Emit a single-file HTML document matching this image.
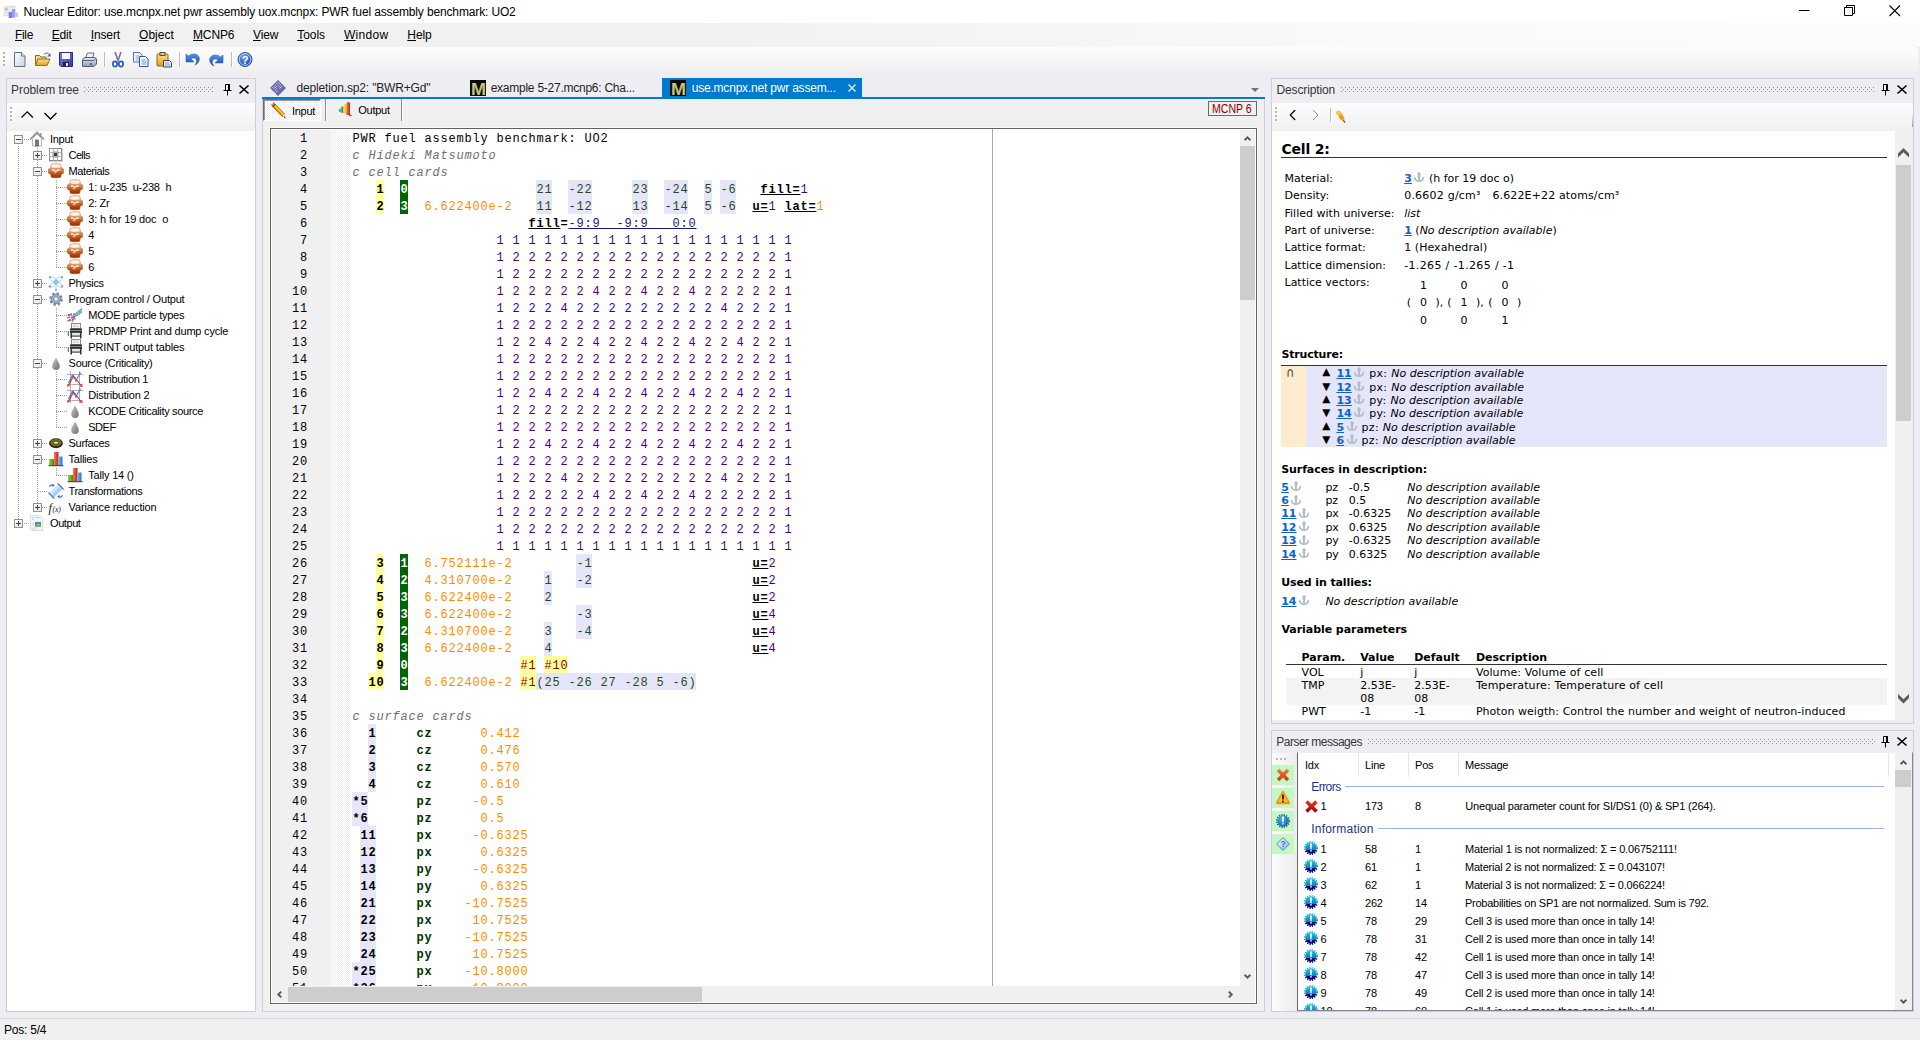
<!DOCTYPE html>
<html lang="en"><head><meta charset="utf-8"><title>Nuclear Editor</title>
<style>

html,body{margin:0;padding:0}
body{width:1920px;height:1040px;position:relative;overflow:hidden;background:#eeeef2;font-family:"Liberation Sans",sans-serif;font-size:12px;color:#000}
div{position:absolute;box-sizing:border-box}
span{white-space:pre}
svg{position:absolute;overflow:visible}
.t{position:absolute;white-space:pre;line-height:1}
.seg{font-family:"Liberation Sans",sans-serif;font-size:12px}
.mss{font-family:"Liberation Sans",sans-serif;font-size:11px;letter-spacing:-0.2px}
.vd{font-family:"DejaVu Sans","Liberation Sans",sans-serif;font-size:11px}
.cap{color:#363636}
.grip{background-image:radial-gradient(circle at .5px .5px,#9a9a9a .5px,transparent .6px),radial-gradient(circle at 2.5px 2.5px,#9a9a9a .5px,transparent .6px);background-size:4px 4px}
.tb{background:linear-gradient(#fdfdfd,#f6f6f6 50%,#efefef)}
.dotv{width:1px;background-image:linear-gradient(#a0a0a0 50%,transparent 50%);background-size:1px 2px}
.doth{height:1px;background-image:linear-gradient(90deg,#a0a0a0 50%,transparent 50%);background-size:2px 1px}
.pm{width:9px;height:9px;border:1px solid #919191;background:linear-gradient(135deg,#fff,#e6e6e6);}
.pm i{position:absolute;left:1px;top:3px;width:5px;height:1px;background:#2b3f8c}
.pm b{position:absolute;left:3px;top:1px;width:1px;height:5px;background:#2b3f8c}
.ed{font-family:"Liberation Mono",monospace;font-size:12px;letter-spacing:.8px}
.ln{position:absolute;left:0;height:17px;width:970px}
.ln span{position:absolute;top:2px;line-height:17px;height:17px;margin-left:.4px}
.ln u{position:absolute;top:0;height:17px}
.lnum{position:absolute;width:37px;margin-left:0 !important;text-align:right;left:0;line-height:17px;height:17px;color:#000}
.c{color:#6e6e6e;font-style:italic}
.cn{font-weight:bold;color:#000}
.mt{color:#fff;font-weight:bold}
.dn{color:#ff8c00}
.sr{color:#1f4a25}
.kw{font-weight:bold;text-decoration:underline;color:#000}
.kb{font-weight:bold;color:#000}
.pv{color:#4b0082}
.nv{color:#191970;text-decoration:underline}
.hr{color:#8b0000}
.sm{font-weight:bold;color:#003200}
.hy{background:#ffffa0}
.hg{background:#006400}
.hl{background:#e6e6fa}
a{color:#0a64c8;text-decoration:underline;font-weight:bold}
.anc{position:static;display:inline-block;vertical-align:-0.5px;margin:-4px 1px 0 2.6px}

</style></head>
<body>
<!-- title bar -->
<div style="left:0px;top:0px;width:1920px;height:23px;background:#fff"></div>
<svg style="left:3px;top:4px" width="16" height="16" viewBox="0 0 16 16">
<rect x=".3" y="1.500" width="12.500" height="11" fill="#e9edf2"/>
<rect x="6" y="2.500" width="6" height="1" fill="#d3dae4"/><rect x="1.500" y="7" width="4" height="1" fill="#d9dfe8"/><rect x="1.500" y="9" width="4" height="1" fill="#d9dfe8"/><rect x="1.500" y="11" width="4" height="1" fill="#d9dfe8"/>
<path d="M1.500 6l1.800-3l1.800 3z" fill="#d8c020"/>
<rect x="5.700" y="8" width="3.300" height="6" fill="#7c7cda"/><rect x="9" y="5" width="3.200" height="8.600" fill="#9c9cf0"/><rect x="12.400" y="8.500" width="2.600" height="4.500" fill="#c6c6f6"/>
</svg>
<span class="t seg" style="left:23.5px;top:6.34px;font-size:12px;color:#000;letter-spacing:-0.14px">Nuclear Editor: use.mcnpx.net pwr assembly uox.mcnpx: PWR fuel assembly benchmark: UO2</span>
<svg style="left:1795px;top:0" width="125" height="23" viewBox="0 0 125 23">
<path d="M4 10.5h10.5" stroke="#000" stroke-width="1" fill="none"/>
<path d="M49.5 7.5h8v8h-8z M51.5 7.5v-2h8v8h-2" stroke="#000" stroke-width="1" fill="none"/>
<path d="M94.5 5.500l10.5 10.500M105 5.5l-10.500 10.500" stroke="#000" stroke-width="1.1" fill="none"/>
</svg>
<!-- menu bar -->
<div style="left:0px;top:23px;width:1920px;height:24px;background:linear-gradient(90deg,#f0f0f0,#f1f1f1 35%,#fafafa 75%,#fbfbfb)"></div>
<span class="t seg" style="left:15px;top:28.84px;font-size:12px;letter-spacing:-0.34px"><span style="text-decoration:underline">F</span>ile</span>
<span class="t seg" style="left:51.7px;top:28.84px;font-size:12px;letter-spacing:-0.18px"><span style="text-decoration:underline">E</span>dit</span>
<span class="t seg" style="left:90.7px;top:28.84px;font-size:12px;letter-spacing:-0.12px"><span style="text-decoration:underline">I</span>nsert</span>
<span class="t seg" style="left:139px;top:28.84px;font-size:12px;letter-spacing:0.05px"><span style="text-decoration:underline">O</span>bject</span>
<span class="t seg" style="left:193px;top:28.84px;font-size:12px;letter-spacing:-0.14px"><span style="text-decoration:underline">M</span>CNP6</span>
<span class="t seg" style="left:253px;top:28.84px;font-size:12px;letter-spacing:-0.13px"><span style="text-decoration:underline">V</span>iew</span>
<span class="t seg" style="left:297.3px;top:28.84px;font-size:12px;letter-spacing:-0.06px"><span style="text-decoration:underline">T</span>ools</span>
<span class="t seg" style="left:344px;top:28.84px;font-size:12px;letter-spacing:0.27px"><span style="text-decoration:underline">W</span>indow</span>
<span class="t seg" style="left:407.3px;top:28.84px;font-size:12px;letter-spacing:-0.07px"><span style="text-decoration:underline">H</span>elp</span>
<!-- main toolbar -->
<div style="left:0px;top:47px;width:1918px;height:25px;background:linear-gradient(#fdfdfd,#f8f8f8 45%,#f0f0f0);border-radius:0 3px 3px 0"></div>
<div style="left:4px;top:53px;width:2px;height:2px;background:#fff"></div>
<div style="left:3px;top:52px;width:2px;height:2px;background:#b4b4b4"></div>
<div style="left:4px;top:57px;width:2px;height:2px;background:#fff"></div>
<div style="left:3px;top:56px;width:2px;height:2px;background:#b4b4b4"></div>
<div style="left:4px;top:61px;width:2px;height:2px;background:#fff"></div>
<div style="left:3px;top:60px;width:2px;height:2px;background:#b4b4b4"></div>
<div style="left:4px;top:65px;width:2px;height:2px;background:#fff"></div>
<div style="left:3px;top:64px;width:2px;height:2px;background:#b4b4b4"></div>
<div style="left:104px;top:52px;width:1px;height:15px;background:#bdbdbd"></div>
<div style="left:105px;top:52px;width:1px;height:15px;background:#fff"></div>
<div style="left:179px;top:52px;width:1px;height:15px;background:#bdbdbd"></div>
<div style="left:180px;top:52px;width:1px;height:15px;background:#fff"></div>
<div style="left:231px;top:52px;width:1px;height:15px;background:#bdbdbd"></div>
<div style="left:232px;top:52px;width:1px;height:15px;background:#fff"></div>
<svg width="0" height="0"><defs><linearGradient id="gpage" x1="0" y1="0" x2="1" y2="1"><stop offset="0" stop-color="#fff"/><stop offset="1" stop-color="#c9d2e4"/></linearGradient><linearGradient id="gfold" x1="0" y1="0" x2="0" y2="1"><stop offset="0" stop-color="#fbe28a"/><stop offset="1" stop-color="#e5a01a"/></linearGradient><linearGradient id="gsave" x1="0" y1="0" x2="1" y2="1"><stop offset="0" stop-color="#7c7ce0"/><stop offset="1" stop-color="#3a3aa8"/></linearGradient><linearGradient id="gprn" x1="0" y1="0" x2="0" y2="1"><stop offset="0" stop-color="#e8eef6"/><stop offset="1" stop-color="#8a9bb4"/></linearGradient><linearGradient id="gblue" x1="0" y1="0" x2="0" y2="1"><stop offset="0" stop-color="#5a8fe0"/><stop offset="1" stop-color="#1c4ea8"/></linearGradient><linearGradient id="gmat" x1="0" y1="0" x2="0" y2="1"><stop offset="0" stop-color="#f9dcc6"/><stop offset=".4" stop-color="#e08a54"/><stop offset=".7" stop-color="#b84c16"/><stop offset="1" stop-color="#8a3206"/></linearGradient><radialGradient id="ghelp" cx=".4" cy=".3" r=".8"><stop offset="0" stop-color="#6aa0f0"/><stop offset="1" stop-color="#1440a0"/></radialGradient><radialGradient id="ginfo" cx=".4" cy=".3" r=".8"><stop offset="0" stop-color="#4ab4ec"/><stop offset="1" stop-color="#0a5f9c"/></radialGradient><linearGradient id="ginfo2" x1="0" y1="0" x2="0" y2="1"><stop offset="0" stop-color="#20c4f4"/><stop offset=".65" stop-color="#0e84a4"/><stop offset=".68" stop-color="#0a0aa4"/><stop offset="1" stop-color="#00007c"/></linearGradient><linearGradient id="gdrop" x1="0" y1="0" x2="1" y2="1"><stop offset="0" stop-color="#c8c8c8"/><stop offset="1" stop-color="#6e6e6e"/></linearGradient></defs></svg>
<svg style="left:12px;top:52px" width="16" height="16" viewBox="0 0 16 16"><path d="M2.500 .5h7l3.500 3.500v10.500h-10.500z" fill="url(#gpage)" stroke="#5b6f8f"/><path d="M9.500 .5v3.500h3.500" fill="#fff" stroke="#5b6f8f"/></svg>
<svg style="left:35px;top:52px" width="16" height="16" viewBox="0 0 16 16"><path d="M.5 13.500v-10h4l1.500 1.500h5v2" fill="#f3d676" stroke="#8a6d2b"/><path d="M.5 13.500l2.500-6.500h12l-3 6.500z" fill="url(#gfold)" stroke="#8a6d2b"/><path d="M9 2.500c2-2.300 4.500-1.800 5.800.8" fill="none" stroke="#3c62a8"/><path d="M15.500 1v3.500h-3.300z" fill="#3c62a8"/></svg>
<svg style="left:58px;top:52px" width="16" height="16" viewBox="0 0 16 16"><path d="M1.500 .5h13v14h-11.500l-1.500-1.500z" fill="url(#gsave)" stroke="#2c2c8c"/><rect x="4" y="1" width="8" height="6" fill="#f4f6fb"/><rect x="5" y="10" width="6" height="4.500" fill="#222244"/><rect x="8" y="11" width="2" height="3" fill="#e8e8f4"/></svg>
<svg style="left:81px;top:52px" width="16" height="16" viewBox="0 0 16 16"><path d="M4.500 6l2-5h6.500l-1.500 5z" fill="#f4f6fa" stroke="#5b6f8f"/><path d="M1.500 7.500l2.500-2h10l1.500 1.500v5l-2.500 2.500h-11.500z" fill="url(#gprn)" stroke="#4c6080"/><path d="M1.500 8.500h11l2.500-2" fill="none" stroke="#4c6080"/><rect x="10" y="11" width="1" height="2" fill="#d03030"/><rect x="9" y="11" width="1" height="2" fill="#30a030"/></svg>
<svg style="left:110px;top:52px" width="16" height="16" viewBox="0 0 16 16"><path d="M5 0l3.200 9M11 0l-3.200 9" stroke="#707880" stroke-width="1.600" fill="none"/><ellipse cx="5" cy="12" rx="2.200" ry="2.600" fill="#fff" stroke="#2c5cc4" stroke-width="1.700"/><ellipse cx="11" cy="12" rx="2.200" ry="2.600" fill="#fff" stroke="#2c5cc4" stroke-width="1.700"/></svg>
<svg style="left:133px;top:52px" width="16" height="16" viewBox="0 0 16 16"><path d="M.5 .5h6l2.500 2.500v7h-8.500z" fill="#fff" stroke="#4f73b8"/><path d="M2.500 4h4M2.500 6h4M2.500 8h4" stroke="#7aa4e6"/><path d="M6.500 4.500h6l2.500 2.500v7.500h-8.500z" fill="#fff" stroke="#2f57a8"/><path d="M8.500 8h4M8.500 10h5M8.500 12h5" stroke="#5c8fe0"/></svg>
<svg style="left:156px;top:52px" width="16" height="16" viewBox="0 0 16 16"><rect x="1" y="2" width="11" height="12" rx="1" fill="url(#gfold)" stroke="#8a6420"/><rect x="4" y=".5" width="5" height="3" fill="#d8c890" stroke="#6a5020"/><path d="M7.500 8.500h6l2 2v4.500h-8z" fill="#e8ecf4" stroke="#3c4658"/><path d="M9 11h4M9 13h5" stroke="#8c9cb8"/></svg>
<svg style="left:185px;top:52px" width="16" height="16" viewBox="0 0 16 16"><path d="M1 2v8h8l-3-3c3-2.500 6.500-.5 5.500 3.500l-1.500 2.500c5-2 6-8.500 1.500-10.500-3-1.300-6-.3-8 1.500z" fill="url(#gblue)" stroke="#1c4ea8" stroke-width=".5"/></svg>
<svg style="left:208px;top:52px" width="16" height="16" viewBox="0 0 16 16"><g transform="translate(16 1) scale(-1 1)"><path d="M1 2v8h8l-3-3c3-2.500 6.500-.5 5.500 3.500l-1.500 2.500c5-2 6-8.500 1.500-10.500-3-1.300-6-.3-8 1.500z" fill="url(#gblue)" stroke="#1c4ea8" stroke-width=".5"/></g></svg>
<svg style="left:237px;top:52px" width="16" height="16" viewBox="0 0 16 16"><circle cx="8" cy="7.500" r="7" fill="url(#ghelp)" stroke="#2a56b0"/><circle cx="8" cy="7.500" r="5.800" fill="none" stroke="#dfe9fb" stroke-width=".8"/><text x="8" y="11.500" text-anchor="middle" font-family="Liberation Sans,sans-serif" font-weight="bold" font-size="11" fill="#fff">?</text></svg>
<!-- status bar -->
<div style="left:0px;top:1018px;width:1920px;height:22px;background:#f0f0f0;border-top:1px solid #d9d9d9"></div>
<span class="t seg" style="left:4px;top:1023.84px;font-size:12px;;letter-spacing:-0.22px">Pos: 5/4</span>
<svg width="0" height="0"><defs><linearGradient id="gtg" x1="0" y1="0" x2="1" y2="0"><stop offset="0" stop-color="#9ad040"/><stop offset="1" stop-color="#3c9418"/></linearGradient><linearGradient id="gtr" x1="0" y1="0" x2="1" y2="0"><stop offset="0" stop-color="#f87858"/><stop offset="1" stop-color="#cc1c0c"/></linearGradient><linearGradient id="gtb" x1="0" y1="0" x2="1" y2="0"><stop offset="0" stop-color="#6cc0f4"/><stop offset="1" stop-color="#1878cc"/></linearGradient></defs></svg>
<svg width="0" height="0"><defs><pattern id="gripp" width="4" height="4" patternUnits="userSpaceOnUse"><rect x="0" y="0" width="1" height="1" fill="#8f8f96"/><rect x="2" y="2" width="1" height="1" fill="#8f8f96"/></pattern></defs></svg>
<!-- problem tree panel -->
<div style="left:6px;top:78px;width:250px;height:934px;border:1px solid #cccedb;background:#eeeef2"></div>
<span class="t seg cap" style="left:11px;top:83.84px;font-size:12px;;letter-spacing:-0.06px">Problem tree</span>
<svg style="left:84px;top:87px" width="130" height="5" shape-rendering="crispEdges"><rect width="130" height="5" fill="url(#gripp)"/></svg>
<svg style="left:223px;top:82.5px" width="30" height="14" viewBox="0 0 30 14"><path d="M2.500 1.500h4v6h-4z" stroke="#000" stroke-width="1" fill="none"/><path d="M5 1.500h2v6h-2z" fill="#000"/><path d="M.5 7.500h8M4.500 8v4.500" stroke="#000" stroke-width="1" fill="none"/><path d="M16.500 2.500l9 8M25.500 2.500l-9 8" stroke="#000" stroke-width="1.600" fill="none"/></svg>
<div class="tb" style="left:7px;top:103px;width:248px;height:28px;"></div>
<div style="left:11px;top:108px;width:2px;height:2px;background:#fff"></div>
<div style="left:10px;top:107px;width:2px;height:2px;background:#b4b4b4"></div>
<div style="left:11px;top:112px;width:2px;height:2px;background:#fff"></div>
<div style="left:10px;top:111px;width:2px;height:2px;background:#b4b4b4"></div>
<div style="left:11px;top:116px;width:2px;height:2px;background:#fff"></div>
<div style="left:10px;top:115px;width:2px;height:2px;background:#b4b4b4"></div>
<div style="left:11px;top:120px;width:2px;height:2px;background:#fff"></div>
<div style="left:10px;top:119px;width:2px;height:2px;background:#b4b4b4"></div>
<svg style="left:20px;top:109px" width="40" height="13" viewBox="0 0 40 13"><path d="M1.500 8.500l5.700-5.700l5.700 5.700M24.500 4l6 6l6-6" stroke="#000" stroke-width="1.300" fill="none"/></svg>
<div style="left:7px;top:131px;width:248px;height:880px;background:#fff"></div>
<!-- tree -->
<div class="dotv" style="left:18px;top:145px;width:1px;height:374px;background-position:0 1px"></div>
<div class="dotv" style="left:37px;top:147px;width:1px;height:360px;background-position:0 1px"></div>
<div class="dotv" style="left:56px;top:179px;width:1px;height:88px;background-position:0 1px"></div>
<div class="dotv" style="left:56px;top:307px;width:1px;height:40px;background-position:0 1px"></div>
<div class="dotv" style="left:56px;top:371px;width:1px;height:56px;background-position:0 1px"></div>
<div class="dotv" style="left:56px;top:467px;width:1px;height:8px;background-position:0 1px"></div>
<div class="doth" style="left:23px;top:139px;width:6px;height:1px;background-position:1px 0"></div>
<div class="pm" style="left:14px;top:135px"><i></i></div>
<svg style="left:29px;top:131px" width="16" height="16" viewBox="0 0 16 16"><path d="M1 8.500l7-7l7 7" stroke="#8e8e8e" stroke-width="1.600" fill="none"/><path d="M3.500 7.500v7.500h9v-7.500l-4.500-4.500z" fill="#fafafa" stroke="#b4b4b4"/><rect x="6.500" y="9" width="3" height="6" fill="#7a7a7a" stroke="#555" stroke-width=".6"/><rect x="11" y="2" width="1.600" height="3" fill="#9a9a9a"/></svg>
<span class="t mss" style="left:50px;top:133.69px;font-size:11px;;letter-spacing:-0.29px">Input</span>
<div class="doth" style="left:42px;top:155px;width:6px;height:1px;background-position:0px 0"></div>
<div class="pm" style="left:33px;top:151px"><i></i><b></b></div>
<svg style="left:48px;top:147px" width="16" height="16" viewBox="0 0 16 16"><rect x="1.500" y="1.500" width="12" height="12" fill="#fff" stroke="#8c8c8c"/><path d="M5.500 1.500v12M9.500 1.500v12M1.500 5.500h12M1.500 9.500h12" stroke="#b8b8b8"/><rect x="6" y="6" width="3" height="3" fill="#3c3c3c"/><rect x="5" y="5" width="5" height="5" fill="none" stroke="#9a9a9a"/><path d="M1.500 14.500h13v-13" stroke="#d0d0d0" fill="none"/></svg>
<span class="t mss" style="left:68.6px;top:149.69px;font-size:11px;;letter-spacing:-0.65px">Cells</span>
<div class="doth" style="left:42px;top:171px;width:6px;height:1px;background-position:0px 0"></div>
<div class="pm" style="left:33px;top:167px"><i></i></div>
<svg style="left:48px;top:163px" width="16" height="16" viewBox="0 0 16 16"><path d="M3.300 1.200q4.700-1 9.400 0l.6 3.600l2.200 1.200v4.200l-2.200 1l-.5 3q-4.800 1.300-9.600 0l-.5-3l-2.200-1v-4.200l2.200-1.200z" fill="url(#gmat)" stroke="#a8501c" stroke-width=".5"/><path d="M3.600 1.600q4.400-.9 8.800 0l.4 2.600q-4.800 1.200-9.600 0z" fill="#fdf1e6"/><path d="M4 7.800q1.300-1.700 2.600-.2q1.300 1.500 2.500-.1q1.100-1.300 2.600 0" stroke="#fff" stroke-width="1.200" fill="none"/><path d="M5.500 9.600q1.500 1 3 0" stroke="#f8d8c0" stroke-width=".8" fill="none"/></svg>
<span class="t mss" style="left:68.6px;top:165.69px;font-size:11px;;letter-spacing:-0.43px">Materials</span>
<div class="doth" style="left:56px;top:187px;width:11px;height:1px;background-position:0px 0"></div>
<svg style="left:67px;top:179px" width="16" height="16" viewBox="0 0 16 16"><path d="M3.300 1.200q4.700-1 9.400 0l.6 3.600l2.200 1.200v4.200l-2.200 1l-.5 3q-4.800 1.300-9.600 0l-.5-3l-2.200-1v-4.200l2.200-1.200z" fill="url(#gmat)" stroke="#a8501c" stroke-width=".5"/><path d="M3.600 1.600q4.400-.9 8.800 0l.4 2.600q-4.800 1.200-9.600 0z" fill="#fdf1e6"/><path d="M4 7.800q1.300-1.700 2.600-.2q1.300 1.500 2.500-.1q1.100-1.300 2.600 0" stroke="#fff" stroke-width="1.200" fill="none"/><path d="M5.500 9.600q1.500 1 3 0" stroke="#f8d8c0" stroke-width=".8" fill="none"/></svg>
<span class="t mss" style="left:88.3px;top:181.69px;font-size:11px;;letter-spacing:-0.21px">1: u-235  u-238  h</span>
<div class="doth" style="left:56px;top:203px;width:11px;height:1px;background-position:0px 0"></div>
<svg style="left:67px;top:195px" width="16" height="16" viewBox="0 0 16 16"><path d="M3.300 1.200q4.700-1 9.400 0l.6 3.600l2.200 1.200v4.200l-2.200 1l-.5 3q-4.800 1.300-9.600 0l-.5-3l-2.200-1v-4.200l2.200-1.200z" fill="url(#gmat)" stroke="#a8501c" stroke-width=".5"/><path d="M3.600 1.600q4.400-.9 8.800 0l.4 2.600q-4.800 1.200-9.600 0z" fill="#fdf1e6"/><path d="M4 7.800q1.300-1.700 2.600-.2q1.300 1.500 2.500-.1q1.100-1.300 2.600 0" stroke="#fff" stroke-width="1.200" fill="none"/><path d="M5.500 9.600q1.500 1 3 0" stroke="#f8d8c0" stroke-width=".8" fill="none"/></svg>
<span class="t mss" style="left:88.3px;top:197.69px;font-size:11px;;letter-spacing:-0.33px">2: Zr</span>
<div class="doth" style="left:56px;top:219px;width:11px;height:1px;background-position:0px 0"></div>
<svg style="left:67px;top:211px" width="16" height="16" viewBox="0 0 16 16"><path d="M3.300 1.200q4.700-1 9.400 0l.6 3.600l2.200 1.200v4.200l-2.200 1l-.5 3q-4.800 1.300-9.600 0l-.5-3l-2.200-1v-4.200l2.200-1.200z" fill="url(#gmat)" stroke="#a8501c" stroke-width=".5"/><path d="M3.600 1.600q4.400-.9 8.800 0l.4 2.600q-4.800 1.200-9.600 0z" fill="#fdf1e6"/><path d="M4 7.800q1.300-1.700 2.600-.2q1.300 1.500 2.500-.1q1.100-1.300 2.600 0" stroke="#fff" stroke-width="1.200" fill="none"/><path d="M5.500 9.600q1.500 1 3 0" stroke="#f8d8c0" stroke-width=".8" fill="none"/></svg>
<span class="t mss" style="left:88.3px;top:213.69px;font-size:11px;;letter-spacing:-0.15px">3: h for 19 doc  o</span>
<div class="doth" style="left:56px;top:235px;width:11px;height:1px;background-position:0px 0"></div>
<svg style="left:67px;top:227px" width="16" height="16" viewBox="0 0 16 16"><path d="M3.300 1.200q4.700-1 9.400 0l.6 3.600l2.200 1.200v4.200l-2.200 1l-.5 3q-4.800 1.300-9.600 0l-.5-3l-2.200-1v-4.200l2.200-1.200z" fill="url(#gmat)" stroke="#a8501c" stroke-width=".5"/><path d="M3.600 1.600q4.400-.9 8.800 0l.4 2.600q-4.800 1.200-9.600 0z" fill="#fdf1e6"/><path d="M4 7.800q1.300-1.700 2.600-.2q1.300 1.500 2.500-.1q1.100-1.300 2.600 0" stroke="#fff" stroke-width="1.200" fill="none"/><path d="M5.500 9.600q1.500 1 3 0" stroke="#f8d8c0" stroke-width=".8" fill="none"/></svg>
<span class="t mss" style="left:88.3px;top:229.69px;font-size:11px;;letter-spacing:-0.62px">4</span>
<div class="doth" style="left:56px;top:251px;width:11px;height:1px;background-position:0px 0"></div>
<svg style="left:67px;top:243px" width="16" height="16" viewBox="0 0 16 16"><path d="M3.300 1.200q4.700-1 9.400 0l.6 3.600l2.200 1.200v4.200l-2.200 1l-.5 3q-4.800 1.300-9.600 0l-.5-3l-2.200-1v-4.200l2.200-1.200z" fill="url(#gmat)" stroke="#a8501c" stroke-width=".5"/><path d="M3.600 1.600q4.400-.9 8.800 0l.4 2.600q-4.800 1.200-9.600 0z" fill="#fdf1e6"/><path d="M4 7.800q1.300-1.700 2.600-.2q1.300 1.500 2.500-.1q1.100-1.300 2.600 0" stroke="#fff" stroke-width="1.200" fill="none"/><path d="M5.500 9.600q1.500 1 3 0" stroke="#f8d8c0" stroke-width=".8" fill="none"/></svg>
<span class="t mss" style="left:88.3px;top:245.69px;font-size:11px;;letter-spacing:-0.62px">5</span>
<div class="doth" style="left:56px;top:267px;width:11px;height:1px;background-position:0px 0"></div>
<svg style="left:67px;top:259px" width="16" height="16" viewBox="0 0 16 16"><path d="M3.300 1.200q4.700-1 9.400 0l.6 3.600l2.200 1.200v4.200l-2.200 1l-.5 3q-4.800 1.300-9.600 0l-.5-3l-2.200-1v-4.200l2.200-1.200z" fill="url(#gmat)" stroke="#a8501c" stroke-width=".5"/><path d="M3.600 1.600q4.400-.9 8.800 0l.4 2.600q-4.800 1.200-9.600 0z" fill="#fdf1e6"/><path d="M4 7.800q1.300-1.700 2.600-.2q1.300 1.500 2.500-.1q1.100-1.300 2.600 0" stroke="#fff" stroke-width="1.200" fill="none"/><path d="M5.500 9.600q1.500 1 3 0" stroke="#f8d8c0" stroke-width=".8" fill="none"/></svg>
<span class="t mss" style="left:88.3px;top:261.69px;font-size:11px;;letter-spacing:-0.62px">6</span>
<div class="doth" style="left:42px;top:283px;width:6px;height:1px;background-position:0px 0"></div>
<div class="pm" style="left:33px;top:279px"><i></i><b></b></div>
<svg style="left:48px;top:275px" width="16" height="16" viewBox="0 0 16 16"><g fill="none" stroke="#a8cfea" stroke-width=".8"><ellipse cx="8" cy="7" rx="8" ry="2.300" transform="rotate(40 8 7)"/><ellipse cx="8" cy="7" rx="8" ry="2.300" transform="rotate(-40 8 7)"/><path d="M8 8.500v5.500"/></g><circle cx="8" cy="7" r="1.800" fill="#9ccdf0" stroke="#5aa2d8" stroke-width=".7"/><circle cx="2" cy="2.200" r=".9" fill="#4a96d4"/><circle cx="14" cy="2.200" r=".9" fill="#4a96d4"/><circle cx="1.800" cy="11.500" r="1" fill="#3c86c8"/><circle cx="14.200" cy="11.500" r="1" fill="#4a96d4"/><circle cx="8" cy="15" r="1" fill="#5aa2d8"/></svg>
<span class="t mss" style="left:68.6px;top:277.69px;font-size:11px;;letter-spacing:-0.42px">Physics</span>
<div class="doth" style="left:42px;top:299px;width:6px;height:1px;background-position:0px 0"></div>
<div class="pm" style="left:33px;top:295px"><i></i></div>
<svg style="left:48px;top:291px" width="16" height="16" viewBox="0 0 16 16"><circle cx="8" cy="8.800" r="5.700" fill="none" stroke="#d0d5e2" stroke-width="2" stroke-dasharray="2.300 2.176"/><circle cx="8" cy="8" r="5.700" fill="none" stroke="#7484a8" stroke-width="2" stroke-dasharray="2.300 2.176"/><circle cx="8" cy="8" r="4.700" fill="#a3afcb" stroke="#6c7ca0" stroke-width=".9"/><circle cx="8" cy="8" r="2.200" fill="#fff" stroke="#6c7ca0" stroke-width=".9"/></svg>
<span class="t mss" style="left:68.6px;top:293.69px;font-size:11px;;letter-spacing:-0.19px">Program control / Output</span>
<div class="doth" style="left:56px;top:315px;width:11px;height:1px;background-position:0px 0"></div>
<svg style="left:67px;top:307px" width="16" height="16" viewBox="0 0 16 16"><path d="M7.500 7l7.500-6.500v5.500l-5 3.500z" fill="#8fc0c4"/><path d="M8.500 6.500l6-4.500M9.500 8l5-3.500" stroke="#4f8f9c" stroke-width=".7"/><g fill="#d0506c"><rect x="1" y="7" width="2" height="2"/><rect x="4" y="9.500" width="2" height="2"/><rect x="2" y="12" width="2" height="2"/><rect x="6" y="6.500" width="2" height="2"/><rect x="7" y="11" width="1.500" height="1.500"/><rect x="0" y="10" width="1.500" height="1.500"/><rect x="4.500" y="13.500" width="1.500" height="1.500"/></g><g fill="#5a78d0"><rect x="3" y="6.500" width="2" height="2"/><rect x="6" y="9" width="2" height="2"/><rect x="1.500" y="9.500" width="1.500" height="1.500"/><rect x="5" y="11.500" width="2" height="2"/><rect x="8" y="8" width="1.500" height="1.500"/><rect x="0.500" y="13" width="1.500" height="1.500"/></g><g fill="#e8a0b0"><rect x="3" y="8.500" width="1" height="1"/><rect x="5" y="8" width="1" height="1"/><rect x="3.500" y="11.500" width="1" height="1"/></g></svg>
<span class="t mss" style="left:88.3px;top:309.69px;font-size:11px;;letter-spacing:-0.26px">MODE particle types</span>
<div class="doth" style="left:56px;top:331px;width:11px;height:1px;background-position:0px 0"></div>
<svg style="left:67px;top:323px" width="16" height="16" viewBox="0 0 16 16"><rect x="4.500" y=".5" width="9" height="5" fill="#f6f6f6" stroke="#8c8c8c"/><path d="M6 2h5M6 3.500h6" stroke="#c4c4c4" stroke-width=".7"/><rect x="3" y="5.500" width="12" height="4.500" fill="#2c2c2c"/><rect x="3" y="7" width="12" height="1" fill="#8a8a8a"/><rect x="5" y="10" width="8" height="2" fill="#fff" stroke="#b0b0b0" stroke-width=".6"/><rect x="3.500" y="10" width="1.500" height="5.500" fill="#333"/><rect x="13" y="10" width="1.500" height="5.500" fill="#333"/><rect x="5" y="12.500" width="8" height="1.200" fill="#444"/><rect x=".8" y="8" width="1" height="5" fill="#555"/></svg>
<span class="t mss" style="left:88.3px;top:325.69px;font-size:11px;;letter-spacing:-0.21px">PRDMP Print and dump cycle</span>
<div class="doth" style="left:56px;top:347px;width:11px;height:1px;background-position:0px 0"></div>
<svg style="left:67px;top:339px" width="16" height="16" viewBox="0 0 16 16"><rect x="4.500" y=".5" width="9" height="5" fill="#f6f6f6" stroke="#8c8c8c"/><path d="M6 2h5M6 3.500h6" stroke="#c4c4c4" stroke-width=".7"/><rect x="3" y="5.500" width="12" height="4.500" fill="#2c2c2c"/><rect x="3" y="7" width="12" height="1" fill="#8a8a8a"/><rect x="5" y="10" width="8" height="2" fill="#fff" stroke="#b0b0b0" stroke-width=".6"/><rect x="3.500" y="10" width="1.500" height="5.500" fill="#333"/><rect x="13" y="10" width="1.500" height="5.500" fill="#333"/><rect x="5" y="12.500" width="8" height="1.200" fill="#444"/><rect x=".8" y="8" width="1" height="5" fill="#555"/></svg>
<span class="t mss" style="left:88.3px;top:341.69px;font-size:11px;;letter-spacing:-0.15px">PRINT output tables</span>
<div class="doth" style="left:42px;top:363px;width:6px;height:1px;background-position:0px 0"></div>
<div class="pm" style="left:33px;top:359px"><i></i></div>
<svg style="left:48px;top:355px" width="16" height="16" viewBox="0 0 16 16"><path d="M8 2.500c-1 2.500-3.800 6-3.800 8.700a3.800 3.800 0 0 0 7.600 0c0-2.700-2.800-6.200-3.800-8.700z" fill="url(#gdrop)"/></svg>
<span class="t mss" style="left:68.6px;top:357.69px;font-size:11px;;letter-spacing:-0.30px">Source (Criticality)</span>
<div class="doth" style="left:56px;top:379px;width:11px;height:1px;background-position:0px 0"></div>
<svg style="left:67px;top:371px" width="16" height="16" viewBox="0 0 16 16"><path d="M3.500 0v16M12.500 0v16M0 3.500h16M0 13.500h16" stroke="#9c9c9c" stroke-width=".8"/><path d="M1.500 12l4-7.500l3.500 5l4-7" stroke="#3c8ce0" stroke-width="1.200" fill="none"/><g fill="#3c8ce0"><rect x="4.700" y="3.700" width="1.800" height="1.800"/><rect x="8.200" y="8.700" width="1.800" height="1.800"/><rect x="12" y="1.700" width="1.800" height="1.800"/></g><path d="M1.500 14.500l5-9.500l7.500 9.500" stroke="#e03030" stroke-width="1.200" fill="none"/><path d="M0 16l.8-3.200l2.200 1.600zM16 16l-3.400-.6l2-2.200z" fill="#e03030"/></svg>
<span class="t mss" style="left:88.3px;top:373.69px;font-size:11px;;letter-spacing:-0.31px">Distribution 1</span>
<div class="doth" style="left:56px;top:395px;width:11px;height:1px;background-position:0px 0"></div>
<svg style="left:67px;top:387px" width="16" height="16" viewBox="0 0 16 16"><path d="M3.500 0v16M12.500 0v16M0 3.500h16M0 13.500h16" stroke="#9c9c9c" stroke-width=".8"/><path d="M1.500 12l4-7.500l3.500 5l4-7" stroke="#3c8ce0" stroke-width="1.200" fill="none"/><g fill="#3c8ce0"><rect x="4.700" y="3.700" width="1.800" height="1.800"/><rect x="8.200" y="8.700" width="1.800" height="1.800"/><rect x="12" y="1.700" width="1.800" height="1.800"/></g><path d="M1.500 14.500l5-9.500l7.500 9.500" stroke="#e03030" stroke-width="1.200" fill="none"/><path d="M0 16l.8-3.200l2.200 1.600zM16 16l-3.400-.6l2-2.200z" fill="#e03030"/></svg>
<span class="t mss" style="left:88.3px;top:389.69px;font-size:11px;;letter-spacing:-0.23px">Distribution 2</span>
<div class="doth" style="left:56px;top:411px;width:11px;height:1px;background-position:0px 0"></div>
<svg style="left:67px;top:403px" width="16" height="16" viewBox="0 0 16 16"><path d="M8 2.500c-1 2.500-3.800 6-3.800 8.700a3.800 3.800 0 0 0 7.600 0c0-2.700-2.800-6.200-3.800-8.700z" fill="url(#gdrop)"/></svg>
<span class="t mss" style="left:88.3px;top:405.69px;font-size:11px;;letter-spacing:-0.34px">KCODE Criticality source</span>
<div class="doth" style="left:56px;top:427px;width:11px;height:1px;background-position:0px 0"></div>
<svg style="left:67px;top:419px" width="16" height="16" viewBox="0 0 16 16"><path d="M8 2.500c-1 2.500-3.800 6-3.800 8.700a3.800 3.800 0 0 0 7.600 0c0-2.700-2.800-6.200-3.800-8.700z" fill="url(#gdrop)"/></svg>
<span class="t mss" style="left:88.3px;top:421.69px;font-size:11px;;letter-spacing:-0.51px">SDEF</span>
<div class="doth" style="left:42px;top:443px;width:6px;height:1px;background-position:0px 0"></div>
<div class="pm" style="left:33px;top:439px"><i></i><b></b></div>
<svg style="left:48px;top:435px" width="16" height="16" viewBox="0 0 16 16"><ellipse cx="8" cy="8.300" rx="6.900" ry="5" fill="#2a2a08"/><ellipse cx="8" cy="7.600" rx="5.600" ry="3.600" fill="#74742a"/><ellipse cx="8" cy="7.700" rx="3" ry="1.700" fill="#e0e0a8" stroke="#2a2a08" stroke-width=".9"/></svg>
<span class="t mss" style="left:68.6px;top:437.69px;font-size:11px;;letter-spacing:-0.33px">Surfaces</span>
<div class="doth" style="left:42px;top:459px;width:6px;height:1px;background-position:0px 0"></div>
<div class="pm" style="left:33px;top:455px"><i></i></div>
<svg style="left:48px;top:451px" width="16" height="16" viewBox="0 0 16 16"><rect x="1" y="8" width="5" height="6.500" fill="url(#gtg)"/><rect x="6" y="1" width="4.500" height="13.500" fill="url(#gtr)"/><rect x="10.500" y="5.500" width="4" height="9" fill="url(#gtb)"/><rect x=".5" y="14.200" width="15" height="1" fill="#333"/></svg>
<span class="t mss" style="left:68.6px;top:453.69px;font-size:11px;;letter-spacing:-0.25px">Tallies</span>
<div class="doth" style="left:56px;top:475px;width:11px;height:1px;background-position:0px 0"></div>
<svg style="left:67px;top:467px" width="16" height="16" viewBox="0 0 16 16"><rect x="1" y="8" width="5" height="6.500" fill="url(#gtg)"/><rect x="6" y="1" width="4.500" height="13.500" fill="url(#gtr)"/><rect x="10.500" y="5.500" width="4" height="9" fill="url(#gtb)"/><rect x=".5" y="14.200" width="15" height="1" fill="#333"/></svg>
<span class="t mss" style="left:88.3px;top:469.69px;font-size:11px;;letter-spacing:-0.20px">Tally 14 ()</span>
<div class="doth" style="left:37px;top:491px;width:11px;height:1px;background-position:1px 0"></div>
<svg style="left:48px;top:483px" width="16" height="16" viewBox="0 0 16 16"><g transform="rotate(-45 8 8)"><rect x="1.500" y="4.800" width="13" height="6.400" fill="#a9d0f2"/><rect x="1.500" y="4.800" width="13" height="3" fill="#cfe6fa"/><path d="M1.500 3.800v8.400M14.500 3.800v8.400" stroke="#2c6cc0" stroke-width="1.200"/></g><path d="M1.500 3.800c.8-1.800 2.400-2.400 4-1.900" stroke="#2c6cc0" stroke-width="1.100" fill="none"/><path d="M6.800 2.400l-2.400 1.500l-.2-2.600z" fill="#2c6cc0"/><path d="M14.500 12.200c-.8 1.800-2.400 2.400-4 1.900" stroke="#2c6cc0" stroke-width="1.100" fill="none"/><path d="M9.200 13.600l2.400-1.500l.2 2.600z" fill="#2c6cc0"/></svg>
<span class="t mss" style="left:68.6px;top:485.69px;font-size:11px;;letter-spacing:-0.35px">Transformations</span>
<div class="doth" style="left:42px;top:507px;width:6px;height:1px;background-position:0px 0"></div>
<div class="pm" style="left:33px;top:503px"><i></i><b></b></div>
<svg style="left:48px;top:499px" width="16" height="16" viewBox="0 0 16 16"><text x=".5" y="12.500" font-family="Liberation Serif,serif" font-style="italic" font-size="12" fill="#111">f</text><text x="4.500" y="12.500" font-family="Liberation Serif,serif" font-style="italic" font-size="7.500" fill="#111">(x)</text></svg>
<span class="t mss" style="left:68.6px;top:501.69px;font-size:11px;;letter-spacing:-0.17px">Variance reduction</span>
<div class="doth" style="left:23px;top:523px;width:6px;height:1px;background-position:1px 0"></div>
<div class="pm" style="left:14px;top:519px"><i></i><b></b></div>
<svg style="left:29px;top:515px" width="16" height="16" viewBox="0 0 16 16"><path d="M1.500 .5h9l3 3v12h-12z" fill="#f4f5f7" stroke="#dedede"/><path d="M3 2.500h3M3 4.500h2M7 2.500h4" stroke="#b8d0ec"/><path d="M3 8h2M3 10h2M3 13h5M3 14.500h4" stroke="#d8dce4"/><rect x="6" y="7" width="6" height="4.500" fill="#4a86d0"/><rect x="6" y="9.500" width="6" height="2" fill="#5aa848"/><rect x="8" y="9" width="2.500" height="1.200" fill="#e8c440"/></svg>
<span class="t mss" style="left:50px;top:517.69px;font-size:11px;;letter-spacing:-0.42px">Output</span>
<!-- document area -->
<svg style="left:270px;top:80px" width="16" height="16" viewBox="0 0 16 16"><defs><pattern id="dpp" width="1.800" height="1.800" patternUnits="userSpaceOnUse" patternTransform="rotate(45 8 8)"><rect width=".9" height=".9" fill="#ececf8"/></pattern></defs><path d="M8 0l8 8l-8 8l-8-8z" fill="#6464ac"/><path d="M8 1.200l5.400 5.400l-6.800 6.800l-5.400-5.400z" fill="url(#dpp)"/><path d="M7 7.300l2.300 2.300" stroke="#6464ac" stroke-width="1.600"/></svg>
<span class="t seg" style="left:296.5px;top:81.84px;font-size:12px;color:#1e1e1e;letter-spacing:-0.16px">depletion.sp2: "BWR+Gd"</span>
<div style="left:470px;top:80px;width:16px;height:16px;background:#0a0a00;overflow:hidden"><span class="t" style="left:0.5px;top:0px;font:bold 17px 'Liberation Sans',sans-serif;color:#c4c47c;transform:scaleX(1.06);transform-origin:0 0">M</span></div>
<span class="t seg" style="left:490.7px;top:81.84px;font-size:12px;color:#1e1e1e;letter-spacing:-0.25px">example 5-27.mcnp6: Cha...</span>
<div style="left:662px;top:78px;width:200px;height:19px;background:#007acc"></div>
<div style="left:670px;top:80px;width:16px;height:16px;background:#0a0a00;overflow:hidden"><span class="t" style="left:0.5px;top:0px;font:bold 17px 'Liberation Sans',sans-serif;color:#c4c47c;transform:scaleX(1.06);transform-origin:0 0">M</span></div>
<span class="t seg" style="left:691.7px;top:81.84px;font-size:12px;color:#fff;letter-spacing:-0.20px">use.mcnpx.net pwr assem...</span>
<svg style="left:847px;top:83px" width="10" height="10" viewBox="0 0 10 10"><path d="M1.500 1.500l7 7M8.500 1.500l-7 7" stroke="#d0e6f5" stroke-width="1.500" fill="none"/></svg>
<svg style="left:1251px;top:88px" width="8" height="4" viewBox="0 0 8 4"><path d="M0 0h8l-4 4z" fill="#717171"/></svg>
<div style="left:262px;top:97px;width:1003px;height:2px;background:#007acc"></div>
<div style="left:262px;top:99px;width:1003px;height:913px;background:#f0f0f0;border:1px solid #ccceDB;border-top:0"></div>
<div style="left:263px;top:99px;width:58px;height:22px;border:1px solid #fff;border-top-color:#6e6e6e;border-left-color:#6e6e6e;background:#f0f0f0"></div>
<div style="left:264px;top:100px;width:56px;height:20px;border-top:1px solid #9a9a9a;border-left:1px solid #9a9a9a;background:repeating-conic-gradient(#fff 0% 25%,#f0f0f0 0% 50%) 0 0/2px 2px"></div>
<svg style="left:270px;top:103px" width="16" height="16" viewBox="0 0 16 16"><path d="M1.300 1.500l2.300-2l11 11.600l-2.300 2z" fill="#f6b010" stroke="#a8500c" stroke-width=".7"/><path d="M2 2.500l10.800 11.300" stroke="#d46a0c" stroke-width="1.100"/><path d="M3.300 .8l10.600 11.200" stroke="#fcd860" stroke-width=".9"/><path d="M1.100 1.600l2.400-2.100l1.300 1.400l-2.400 2.100z" fill="#f08468"/><path d="M1.700 1.100l1.200-1" stroke="#fff" stroke-width=".8"/><path d="M2.400 3l2.400-2.100l.8.900l-2.400 2.100z" fill="#2c3c4c"/><path d="M12.300 13.100l2.300-2l1.300 4z" fill="#e8c8a0"/><path d="M14.400 13.600l1.500 1.900l-2.200-1z" fill="#222"/></svg>
<span class="t mss" style="left:292px;top:105.69px;font-size:11px;;letter-spacing:-0.29px">Input</span>
<div style="left:325px;top:99px;width:1px;height:22px;background:#8a8a8a"></div>
<div style="left:326px;top:99px;width:1px;height:22px;background:#fff"></div>
<svg style="left:337px;top:101px" width="16" height="16" viewBox="0 0 16 16"><defs><linearGradient id="gob" x1="0" y1="0" x2="1" y2="0"><stop offset="0" stop-color="#f4744a"/><stop offset=".55" stop-color="#e04a1c"/><stop offset="1" stop-color="#b82c0c"/></linearGradient><linearGradient id="goy" x1="0" y1="0" x2="1" y2="0"><stop offset="0" stop-color="#f8ec80"/><stop offset="1" stop-color="#d4b428"/></linearGradient><linearGradient id="gog" x1="0" y1="0" x2="1" y2="0"><stop offset="0" stop-color="#8cc850"/><stop offset="1" stop-color="#2c7a1c"/></linearGradient></defs><path d="M9.500 13l4.800 1.500" stroke="#2c2c2c" stroke-width="1.200"/><path d="M1.800 8l2.200-.6v4l-2.200-.7z" fill="#3cacec"/><path d="M4 5.800l2.500-.6v7l-2.500-.8z" fill="url(#gog)"/><path d="M6.500 3.800l3-.7v10l-3-.9z" fill="url(#goy)"/><path d="M9.500 1.700q1.700-1.200 3.500 0v12.700l-3.500-1.200z" fill="url(#gob)"/></svg>
<span class="t mss" style="left:358.3px;top:104.69px;font-size:11px;;letter-spacing:-0.26px">Output</span>
<div style="left:401px;top:99px;width:1px;height:22px;background:#8a8a8a"></div>
<div style="left:402px;top:99px;width:1px;height:22px;background:#fff"></div>
<div style="left:1208px;top:101px;width:49px;height:15px;border:1px solid #6a6a6a;background:#f0f0f0"></div>
<span class="t seg" style="left:1212.3px;top:103px;font-size:12.5px;color:#8b0000;transform:scaleX(.845);transform-origin:0 0">MCNP 6</span>
<div style="left:270px;top:128px;width:987px;height:876px;border:1px solid #626262;background:#fff;box-shadow:0 0 0 1px #fafafa"></div>
<div style="left:272px;top:130px;width:59px;height:856px;background:#f0f0f0"></div>
<div style="left:331px;top:130px;width:20px;height:856px;background:repeating-conic-gradient(#fff 0% 25%,#f0f0f0 0% 50%) 0 0/2px 2px"></div>
<div style="left:992px;top:129px;width:1px;height:857px;background:#a8a8a8"></div>
<div class="ed" style="left:271px;top:129px;width:969px;height:857px;overflow:hidden"><div class="ln" style="top:0px"><span class="lnum">1</span><span style="left:81px">PWR fuel assembly benchmark: UO2</span></div><div class="ln" style="top:17px"><span class="lnum">2</span><span class="c" style="left:81px">c Hideki Matsumoto</span></div><div class="ln" style="top:34px"><span class="lnum">3</span><span class="c" style="left:81px">c cell cards</span></div><div class="ln" style="top:51px"><span class="lnum">4</span><u class="hy" style="left:105px;width:8px"></u><span class="cn" style="left:105px">1</span><u class="hg" style="left:129px;width:8px"></u><span class="mt" style="left:129px">0</span><u class="hl" style="left:265px;width:16px"></u><span class="sr" style="left:265px">21</span><u class="hl" style="left:297px;width:24px"></u><span class="sr" style="left:297px">-22</span><u class="hl" style="left:361px;width:16px"></u><span class="sr" style="left:361px">23</span><u class="hl" style="left:393px;width:24px"></u><span class="sr" style="left:393px">-24</span><u class="hl" style="left:433px;width:8px"></u><span class="sr" style="left:433px">5</span><u class="hl" style="left:449px;width:16px"></u><span class="sr" style="left:449px">-6</span><span class="kw" style="left:489px">fill=</span><span class="pv" style="left:529px">1</span></div><div class="ln" style="top:68px"><span class="lnum">5</span><u class="hy" style="left:105px;width:8px"></u><span class="cn" style="left:105px">2</span><u class="hg" style="left:129px;width:8px"></u><span class="mt" style="left:129px">3</span><span class="dn" style="left:153px">6.622400e-2</span><u class="hl" style="left:265px;width:16px"></u><span class="sr" style="left:265px">11</span><u class="hl" style="left:297px;width:24px"></u><span class="sr" style="left:297px">-12</span><u class="hl" style="left:361px;width:16px"></u><span class="sr" style="left:361px">13</span><u class="hl" style="left:393px;width:24px"></u><span class="sr" style="left:393px">-14</span><u class="hl" style="left:433px;width:8px"></u><span class="sr" style="left:433px">5</span><u class="hl" style="left:449px;width:16px"></u><span class="sr" style="left:449px">-6</span><span class="kw" style="left:481px">u=</span><span class="pv" style="left:497px">1</span><span class="kw" style="left:513px">lat=</span><span class="dn" style="left:545px">1</span></div><div class="ln" style="top:85px"><span class="lnum">6</span><span class="kw" style="left:257px">fill</span><span class="kb" style="left:289px">=</span><span class="nv" style="left:297px">-9:9  -9:9   0:0</span></div><div class="ln" style="top:102px"><span class="lnum">7</span><span class="pv" style="left:225px">1 1 1 1 1 1 1 1 1 1 1 1 1 1 1 1 1 1 1</span></div><div class="ln" style="top:119px"><span class="lnum">8</span><span class="pv" style="left:225px">1 2 2 2 2 2 2 2 2 2 2 2 2 2 2 2 2 2 1</span></div><div class="ln" style="top:136px"><span class="lnum">9</span><span class="pv" style="left:225px">1 2 2 2 2 2 2 2 2 2 2 2 2 2 2 2 2 2 1</span></div><div class="ln" style="top:153px"><span class="lnum">10</span><span class="pv" style="left:225px">1 2 2 2 2 2 4 2 2 4 2 2 4 2 2 2 2 2 1</span></div><div class="ln" style="top:170px"><span class="lnum">11</span><span class="pv" style="left:225px">1 2 2 2 4 2 2 2 2 2 2 2 2 2 4 2 2 2 1</span></div><div class="ln" style="top:187px"><span class="lnum">12</span><span class="pv" style="left:225px">1 2 2 2 2 2 2 2 2 2 2 2 2 2 2 2 2 2 1</span></div><div class="ln" style="top:204px"><span class="lnum">13</span><span class="pv" style="left:225px">1 2 2 4 2 2 4 2 2 4 2 2 4 2 2 4 2 2 1</span></div><div class="ln" style="top:221px"><span class="lnum">14</span><span class="pv" style="left:225px">1 2 2 2 2 2 2 2 2 2 2 2 2 2 2 2 2 2 1</span></div><div class="ln" style="top:238px"><span class="lnum">15</span><span class="pv" style="left:225px">1 2 2 2 2 2 2 2 2 2 2 2 2 2 2 2 2 2 1</span></div><div class="ln" style="top:255px"><span class="lnum">16</span><span class="pv" style="left:225px">1 2 2 4 2 2 4 2 2 4 2 2 4 2 2 4 2 2 1</span></div><div class="ln" style="top:272px"><span class="lnum">17</span><span class="pv" style="left:225px">1 2 2 2 2 2 2 2 2 2 2 2 2 2 2 2 2 2 1</span></div><div class="ln" style="top:289px"><span class="lnum">18</span><span class="pv" style="left:225px">1 2 2 2 2 2 2 2 2 2 2 2 2 2 2 2 2 2 1</span></div><div class="ln" style="top:306px"><span class="lnum">19</span><span class="pv" style="left:225px">1 2 2 4 2 2 4 2 2 4 2 2 4 2 2 4 2 2 1</span></div><div class="ln" style="top:323px"><span class="lnum">20</span><span class="pv" style="left:225px">1 2 2 2 2 2 2 2 2 2 2 2 2 2 2 2 2 2 1</span></div><div class="ln" style="top:340px"><span class="lnum">21</span><span class="pv" style="left:225px">1 2 2 2 4 2 2 2 2 2 2 2 2 2 4 2 2 2 1</span></div><div class="ln" style="top:357px"><span class="lnum">22</span><span class="pv" style="left:225px">1 2 2 2 2 2 4 2 2 4 2 2 4 2 2 2 2 2 1</span></div><div class="ln" style="top:374px"><span class="lnum">23</span><span class="pv" style="left:225px">1 2 2 2 2 2 2 2 2 2 2 2 2 2 2 2 2 2 1</span></div><div class="ln" style="top:391px"><span class="lnum">24</span><span class="pv" style="left:225px">1 2 2 2 2 2 2 2 2 2 2 2 2 2 2 2 2 2 1</span></div><div class="ln" style="top:408px"><span class="lnum">25</span><span class="pv" style="left:225px">1 1 1 1 1 1 1 1 1 1 1 1 1 1 1 1 1 1 1</span></div><div class="ln" style="top:425px"><span class="lnum">26</span><u class="hy" style="left:105px;width:8px"></u><span class="cn" style="left:105px">3</span><u class="hg" style="left:129px;width:8px"></u><span class="mt" style="left:129px">1</span><span class="dn" style="left:153px">6.752111e-2</span><u class="hl" style="left:305px;width:16px"></u><span class="sr" style="left:305px">-1</span><span class="kw" style="left:481px">u=</span><span class="pv" style="left:497px">2</span></div><div class="ln" style="top:442px"><span class="lnum">27</span><u class="hy" style="left:105px;width:8px"></u><span class="cn" style="left:105px">4</span><u class="hg" style="left:129px;width:8px"></u><span class="mt" style="left:129px">2</span><span class="dn" style="left:153px">4.310700e-2</span><u class="hl" style="left:273px;width:8px"></u><span class="sr" style="left:273px">1</span><u class="hl" style="left:305px;width:16px"></u><span class="sr" style="left:305px">-2</span><span class="kw" style="left:481px">u=</span><span class="pv" style="left:497px">2</span></div><div class="ln" style="top:459px"><span class="lnum">28</span><u class="hy" style="left:105px;width:8px"></u><span class="cn" style="left:105px">5</span><u class="hg" style="left:129px;width:8px"></u><span class="mt" style="left:129px">3</span><span class="dn" style="left:153px">6.622400e-2</span><u class="hl" style="left:273px;width:8px"></u><span class="sr" style="left:273px">2</span><span class="kw" style="left:481px">u=</span><span class="pv" style="left:497px">2</span></div><div class="ln" style="top:476px"><span class="lnum">29</span><u class="hy" style="left:105px;width:8px"></u><span class="cn" style="left:105px">6</span><u class="hg" style="left:129px;width:8px"></u><span class="mt" style="left:129px">3</span><span class="dn" style="left:153px">6.622400e-2</span><u class="hl" style="left:305px;width:16px"></u><span class="sr" style="left:305px">-3</span><span class="kw" style="left:481px">u=</span><span class="pv" style="left:497px">4</span></div><div class="ln" style="top:493px"><span class="lnum">30</span><u class="hy" style="left:105px;width:8px"></u><span class="cn" style="left:105px">7</span><u class="hg" style="left:129px;width:8px"></u><span class="mt" style="left:129px">2</span><span class="dn" style="left:153px">4.310700e-2</span><u class="hl" style="left:273px;width:8px"></u><span class="sr" style="left:273px">3</span><u class="hl" style="left:305px;width:16px"></u><span class="sr" style="left:305px">-4</span><span class="kw" style="left:481px">u=</span><span class="pv" style="left:497px">4</span></div><div class="ln" style="top:510px"><span class="lnum">31</span><u class="hy" style="left:105px;width:8px"></u><span class="cn" style="left:105px">8</span><u class="hg" style="left:129px;width:8px"></u><span class="mt" style="left:129px">3</span><span class="dn" style="left:153px">6.622400e-2</span><u class="hl" style="left:273px;width:8px"></u><span class="sr" style="left:273px">4</span><span class="kw" style="left:481px">u=</span><span class="pv" style="left:497px">4</span></div><div class="ln" style="top:527px"><span class="lnum">32</span><u class="hy" style="left:105px;width:8px"></u><span class="cn" style="left:105px">9</span><u class="hg" style="left:129px;width:8px"></u><span class="mt" style="left:129px">0</span><u class="hy" style="left:249px;width:16px"></u><span class="hr" style="left:249px">#1</span><u class="hy" style="left:273px;width:24px"></u><span class="hr" style="left:273px">#10</span></div><div class="ln" style="top:544px"><span class="lnum">33</span><u class="hy" style="left:97px;width:16px"></u><span class="cn" style="left:97px">10</span><u class="hg" style="left:129px;width:8px"></u><span class="mt" style="left:129px">3</span><span class="dn" style="left:153px">6.622400e-2</span><u class="hy" style="left:249px;width:16px"></u><span class="hr" style="left:249px">#1</span><u class="hl" style="left:265px;width:160px"></u><span class="sr" style="left:265px">(25 -26 27 -28 5 -6)</span></div><div class="ln" style="top:561px"><span class="lnum">34</span></div><div class="ln" style="top:578px"><span class="lnum">35</span><span class="c" style="left:81px">c surface cards</span></div><div class="ln" style="top:595px"><span class="lnum">36</span><u class="hl" style="left:97px;width:8px"></u><span class="cn" style="left:97px">1</span><span class="sm" style="left:145px">cz</span><span class="dn" style="left:209px">0.412</span></div><div class="ln" style="top:612px"><span class="lnum">37</span><u class="hl" style="left:97px;width:8px"></u><span class="cn" style="left:97px">2</span><span class="sm" style="left:145px">cz</span><span class="dn" style="left:209px">0.476</span></div><div class="ln" style="top:629px"><span class="lnum">38</span><u class="hl" style="left:97px;width:8px"></u><span class="cn" style="left:97px">3</span><span class="sm" style="left:145px">cz</span><span class="dn" style="left:209px">0.570</span></div><div class="ln" style="top:646px"><span class="lnum">39</span><u class="hl" style="left:97px;width:8px"></u><span class="cn" style="left:97px">4</span><span class="sm" style="left:145px">cz</span><span class="dn" style="left:209px">0.610</span></div><div class="ln" style="top:663px"><span class="lnum">40</span><u class="hl" style="left:81px;width:16px"></u><span class="cn" style="left:81px">*5</span><span class="sm" style="left:145px">pz</span><span class="dn" style="left:201px">-0.5</span></div><div class="ln" style="top:680px"><span class="lnum">41</span><u class="hl" style="left:81px;width:16px"></u><span class="cn" style="left:81px">*6</span><span class="sm" style="left:145px">pz</span><span class="dn" style="left:209px">0.5</span></div><div class="ln" style="top:697px"><span class="lnum">42</span><u class="hl" style="left:89px;width:16px"></u><span class="cn" style="left:89px">11</span><span class="sm" style="left:145px">px</span><span class="dn" style="left:201px">-0.6325</span></div><div class="ln" style="top:714px"><span class="lnum">43</span><u class="hl" style="left:89px;width:16px"></u><span class="cn" style="left:89px">12</span><span class="sm" style="left:145px">px</span><span class="dn" style="left:209px">0.6325</span></div><div class="ln" style="top:731px"><span class="lnum">44</span><u class="hl" style="left:89px;width:16px"></u><span class="cn" style="left:89px">13</span><span class="sm" style="left:145px">py</span><span class="dn" style="left:201px">-0.6325</span></div><div class="ln" style="top:748px"><span class="lnum">45</span><u class="hl" style="left:89px;width:16px"></u><span class="cn" style="left:89px">14</span><span class="sm" style="left:145px">py</span><span class="dn" style="left:209px">0.6325</span></div><div class="ln" style="top:765px"><span class="lnum">46</span><u class="hl" style="left:89px;width:16px"></u><span class="cn" style="left:89px">21</span><span class="sm" style="left:145px">px</span><span class="dn" style="left:193px">-10.7525</span></div><div class="ln" style="top:782px"><span class="lnum">47</span><u class="hl" style="left:89px;width:16px"></u><span class="cn" style="left:89px">22</span><span class="sm" style="left:145px">px</span><span class="dn" style="left:201px">10.7525</span></div><div class="ln" style="top:799px"><span class="lnum">48</span><u class="hl" style="left:89px;width:16px"></u><span class="cn" style="left:89px">23</span><span class="sm" style="left:145px">py</span><span class="dn" style="left:193px">-10.7525</span></div><div class="ln" style="top:816px"><span class="lnum">49</span><u class="hl" style="left:89px;width:16px"></u><span class="cn" style="left:89px">24</span><span class="sm" style="left:145px">py</span><span class="dn" style="left:201px">10.7525</span></div><div class="ln" style="top:833px"><span class="lnum">50</span><u class="hl" style="left:81px;width:24px"></u><span class="cn" style="left:81px">*25</span><span class="sm" style="left:145px">px</span><span class="dn" style="left:193px">-10.8000</span></div><div class="ln" style="top:850px"><span class="lnum">51</span><u class="hl" style="left:81px;width:24px"></u><span class="cn" style="left:81px">*26</span><span class="sm" style="left:145px">px</span><span class="dn" style="left:201px">10.8000</span></div></div>
<div style="left:1240px;top:130px;width:15px;height:856px;background:#f0f0f0"></div>
<div style="left:1240px;top:146px;width:15px;height:154px;background:#cdcdcd"></div>
<svg style="left:1243px;top:134.5px" width="9" height="6" viewBox="0 0 9 6"><path d="M1.600 5.200l2.900-2.900l2.900 2.900" stroke="#5a5a5a" stroke-width="2" fill="none"/></svg>
<svg style="left:1243px;top:974px" width="9" height="6" viewBox="0 0 9 6"><path d="M1.600 .8l2.900 2.900l2.900-2.900" stroke="#5a5a5a" stroke-width="2" fill="none"/></svg>
<div style="left:272px;top:986px;width:983px;height:16px;background:#f0f0f0"></div>
<div style="left:288px;top:987px;width:414px;height:15px;background:#cdcdcd"></div>
<svg style="left:276px;top:990px" width="6" height="9" viewBox="0 0 6 9"><path d="M5.200 1.600l-2.900 2.900l2.900 2.900" stroke="#5a5a5a" stroke-width="2" fill="none"/></svg>
<svg style="left:1228px;top:990px" width="6" height="9" viewBox="0 0 6 9"><path d="M.8 1.600l2.900 2.900l-2.900 2.900" stroke="#5a5a5a" stroke-width="2" fill="none"/></svg>
<!-- description panel -->
<div style="left:1271px;top:78px;width:643px;height:646px;border:1px solid #cccedb;background:#eeeef2"></div>
<span class="t seg cap" style="left:1276.5px;top:83.84px;font-size:12px;;letter-spacing:-0.14px">Description</span>
<svg style="left:1341px;top:87px" width="534" height="5" shape-rendering="crispEdges"><rect width="534" height="5" fill="url(#gripp)"/></svg>
<svg style="left:1881px;top:82.5px" width="30" height="14" viewBox="0 0 30 14"><path d="M2.500 1.500h4v6h-4z" stroke="#000" stroke-width="1" fill="none"/><path d="M5 1.500h2v6h-2z" fill="#000"/><path d="M.5 7.500h8M4.500 8v4.500" stroke="#000" stroke-width="1" fill="none"/><path d="M16.500 2.500l9 8M25.500 2.500l-9 8" stroke="#000" stroke-width="1.600" fill="none"/></svg>
<div class="tb" style="left:1272px;top:103px;width:641px;height:28px;border-radius:3px 3px 0 0"></div>
<div style="left:1912px;top:114px;width:1px;height:13px;background:linear-gradient(#f0f0f0,#9a9a9a)"></div>
<div style="left:1276px;top:108px;width:2px;height:2px;background:#fff"></div>
<div style="left:1275px;top:107px;width:2px;height:2px;background:#b4b4b4"></div>
<div style="left:1276px;top:112px;width:2px;height:2px;background:#fff"></div>
<div style="left:1275px;top:111px;width:2px;height:2px;background:#b4b4b4"></div>
<div style="left:1276px;top:116px;width:2px;height:2px;background:#fff"></div>
<div style="left:1275px;top:115px;width:2px;height:2px;background:#b4b4b4"></div>
<div style="left:1276px;top:120px;width:2px;height:2px;background:#fff"></div>
<div style="left:1275px;top:119px;width:2px;height:2px;background:#b4b4b4"></div>
<svg style="left:1288px;top:108px" width="34" height="14" viewBox="0 0 34 14"><path d="M7.200 2l-5 5l5 5" stroke="#000" stroke-width="1.150" fill="none"/><path d="M25 2l5 5l-5 5" stroke="#8c8c8c" stroke-width="1" fill="none"/></svg>
<div style="left:1330px;top:108px;width:1px;height:14px;background:#bdbdbd"></div>
<div style="left:1331px;top:108px;width:1px;height:14px;background:#fff"></div>
<svg style="left:1334px;top:109px" width="14" height="16" viewBox="0 0 14 16"><path d="M8.800 10.500l2.200 3.200" stroke="#4c4c70" stroke-width="1.300" fill="none"/><ellipse cx="7.600" cy="8.800" rx="3.300" ry="2" transform="rotate(38 7.600 8.800)" fill="#f3a220"/><path d="M4 5.500l2.500-2l3.200 4l-2.600 2z" fill="#ee9618"/><ellipse cx="5" cy="4.300" rx="3" ry="2.200" transform="rotate(38 5 4.300)" fill="#f8b436"/><ellipse cx="4.500" cy="3.600" rx="1.500" ry=".9" transform="rotate(38 4.500 3.600)" fill="#fcd684"/></svg>
<div style="left:1272px;top:131px;width:623px;height:589px;background:#fff"></div>
<div style="left:1895px;top:131px;width:17px;height:589px;background:#f0f0f0"></div>
<div style="left:1896px;top:165px;width:15px;height:256px;background:#cdcdcd"></div>
<svg style="left:1898px;top:148px" width="11" height="10" viewBox="0 0 11 10"><path d="M0 5.500L5.500 0L11 5.500V9.500L5.500 4.200L0 9.500z" fill="#5c5c5c"/></svg>
<svg style="left:1898px;top:694px" width="11" height="10" viewBox="0 0 11 10"><path d="M0 4L5.500 9.500L11 4V0L5.500 5.300L0 0z" fill="#5c5c5c"/></svg>
<span class="t vd" style="left:1281.4px;top:142.16px;font-size:14px;font-weight:bold;letter-spacing:-0.17px">Cell 2:</span>
<div style="left:1281px;top:157px;width:606px;height:1px;background:#333"></div>
<span class="t vd" style="left:1284.5px;top:172.69px;font-size:11px;">Material:</span>
<span class="t vd" style="left:1404.2px;top:172.69px;font-size:11px;"><a>3</a><svg class="anc" width="10" height="10" viewBox="0 0 10 10"><circle cx="5" cy="1.900" r="1.700" fill="#b2bcc6"/><path d="M5 2v7" stroke="#b2bcc6" stroke-width="1.900" fill="none"/><path d="M3.300 4.300h3.400" stroke="#b2bcc6" stroke-width="1" fill="none"/><path d="M.7 5.600c.5 2.700 2.300 3.600 4.300 3.600s3.800-.9 4.300-3.600" stroke="#b2bcc6" stroke-width="1.700" fill="none" stroke-linecap="round"/></svg> (h for 19 doc o)</span>
<span class="t vd" style="left:1284.5px;top:189.69px;font-size:11px;">Density:</span>
<span class="t vd" style="left:1404.2px;top:189.69px;font-size:11px;;letter-spacing:0.22px">0.6602 g/cm³</span>
<span class="t vd" style="left:1492.4px;top:189.69px;font-size:11px;;letter-spacing:0.14px">6.622E+22 atoms/cm³</span>
<span class="t vd" style="left:1284.5px;top:207.69px;font-size:11px;;letter-spacing:0.01px">Filled with universe:</span>
<span class="t vd" style="left:1404.2px;top:207.69px;font-size:11px;"><i>list</i></span>
<span class="t vd" style="left:1284.5px;top:224.69px;font-size:11px;">Part of universe:</span>
<span class="t vd" style="left:1404.2px;top:224.69px;font-size:11px;"><a>1</a> (<i>No description available</i>)</span>
<span class="t vd" style="left:1284.5px;top:241.69px;font-size:11px;">Lattice format:</span>
<span class="t vd" style="left:1404.2px;top:241.69px;font-size:11px;;letter-spacing:0.06px">1 (Hexahedral)</span>
<span class="t vd" style="left:1284.5px;top:259.69px;font-size:11px;">Lattice dimension:</span>
<span class="t vd" style="left:1404.2px;top:259.69px;font-size:11px;;letter-spacing:0.35px">-1.265 / -1.265 / -1</span>
<span class="t vd" style="left:1284.5px;top:276.69px;font-size:11px;">Lattice vectors:</span>
<span class="t vd" style="left:1413.5px;top:280.39px;width:20px;text-align:center">1</span>
<span class="t vd" style="left:1454px;top:280.39px;width:20px;text-align:center">0</span>
<span class="t vd" style="left:1495px;top:280.39px;width:20px;text-align:center">0</span>
<span class="t vd" style="left:1413.5px;top:297.39px;width:20px;text-align:center">0</span>
<span class="t vd" style="left:1454px;top:297.39px;width:20px;text-align:center">1</span>
<span class="t vd" style="left:1495px;top:297.39px;width:20px;text-align:center">0</span>
<span class="t vd" style="left:1413.5px;top:314.69px;width:20px;text-align:center">0</span>
<span class="t vd" style="left:1454px;top:314.69px;width:20px;text-align:center">0</span>
<span class="t vd" style="left:1495px;top:314.69px;width:20px;text-align:center">1</span>
<span class="t vd" style="left:1399px;top:297.39px;width:20px;text-align:center">(</span>
<span class="t vd" style="left:1439.5px;top:297.39px;width:20px;text-align:center">(</span>
<span class="t vd" style="left:1480.5px;top:297.39px;width:20px;text-align:center">(</span>
<span class="t vd" style="left:1435.4px;top:297.39px;font-size:11px;">),</span>
<span class="t vd" style="left:1476px;top:297.39px;font-size:11px;">),</span>
<span class="t vd" style="left:1517px;top:297.39px;font-size:11px;">)</span>
<span class="t vd" style="left:1281.4px;top:348.69px;font-size:11px;font-weight:bold;letter-spacing:-0.17px">Structure:</span>
<div style="left:1281px;top:365px;width:606px;height:1px;background:#333"></div>
<div style="left:1281px;top:366px;width:606px;height:81px;background:#e6e6fa"></div>
<div style="left:1281px;top:366px;width:25px;height:81px;background:#ffebcd"></div>
<span class="t vd" style="left:1286.2px;top:366.30px;font-size:13px;color:#333;transform:scaleX(.85);transform-origin:0 0">∩</span>
<span class="t vd" style="left:1322.3px;top:366.12px;font-size:10.5px;">▲</span>
<span class="t vd" style="left:1336.4px;top:367.69px;font-size:11px;"><a>11</a><svg class="anc" width="10" height="10" viewBox="0 0 10 10"><circle cx="5" cy="1.900" r="1.700" fill="#b2bcc6"/><path d="M5 2v7" stroke="#b2bcc6" stroke-width="1.900" fill="none"/><path d="M3.300 4.300h3.400" stroke="#b2bcc6" stroke-width="1" fill="none"/><path d="M.7 5.600c.5 2.700 2.300 3.600 4.300 3.600s3.800-.9 4.300-3.600" stroke="#b2bcc6" stroke-width="1.700" fill="none" stroke-linecap="round"/></svg><span style="letter-spacing:.35px"> px: </span><i>No description available</i></span>
<span class="t vd" style="left:1322.3px;top:381.12px;font-size:10.5px;">▼</span>
<span class="t vd" style="left:1336.4px;top:381.69px;font-size:11px;"><a>12</a><svg class="anc" width="10" height="10" viewBox="0 0 10 10"><circle cx="5" cy="1.900" r="1.700" fill="#b2bcc6"/><path d="M5 2v7" stroke="#b2bcc6" stroke-width="1.900" fill="none"/><path d="M3.300 4.300h3.400" stroke="#b2bcc6" stroke-width="1" fill="none"/><path d="M.7 5.600c.5 2.700 2.300 3.600 4.300 3.600s3.800-.9 4.300-3.600" stroke="#b2bcc6" stroke-width="1.700" fill="none" stroke-linecap="round"/></svg><span style="letter-spacing:.35px"> px: </span><i>No description available</i></span>
<span class="t vd" style="left:1322.3px;top:393.12px;font-size:10.5px;">▲</span>
<span class="t vd" style="left:1336.4px;top:394.69px;font-size:11px;"><a>13</a><svg class="anc" width="10" height="10" viewBox="0 0 10 10"><circle cx="5" cy="1.900" r="1.700" fill="#b2bcc6"/><path d="M5 2v7" stroke="#b2bcc6" stroke-width="1.900" fill="none"/><path d="M3.300 4.300h3.400" stroke="#b2bcc6" stroke-width="1" fill="none"/><path d="M.7 5.600c.5 2.700 2.300 3.600 4.300 3.600s3.800-.9 4.300-3.600" stroke="#b2bcc6" stroke-width="1.700" fill="none" stroke-linecap="round"/></svg><span style="letter-spacing:.35px"> py: </span><i>No description available</i></span>
<span class="t vd" style="left:1322.3px;top:407.12px;font-size:10.5px;">▼</span>
<span class="t vd" style="left:1336.4px;top:407.69px;font-size:11px;"><a>14</a><svg class="anc" width="10" height="10" viewBox="0 0 10 10"><circle cx="5" cy="1.900" r="1.700" fill="#b2bcc6"/><path d="M5 2v7" stroke="#b2bcc6" stroke-width="1.900" fill="none"/><path d="M3.300 4.300h3.400" stroke="#b2bcc6" stroke-width="1" fill="none"/><path d="M.7 5.600c.5 2.700 2.300 3.600 4.300 3.600s3.800-.9 4.300-3.600" stroke="#b2bcc6" stroke-width="1.700" fill="none" stroke-linecap="round"/></svg><span style="letter-spacing:.35px"> py: </span><i>No description available</i></span>
<span class="t vd" style="left:1322.3px;top:420.12px;font-size:10.5px;">▲</span>
<span class="t vd" style="left:1336.4px;top:421.69px;font-size:11px;"><a>5</a><svg class="anc" width="10" height="10" viewBox="0 0 10 10"><circle cx="5" cy="1.900" r="1.700" fill="#b2bcc6"/><path d="M5 2v7" stroke="#b2bcc6" stroke-width="1.900" fill="none"/><path d="M3.300 4.300h3.400" stroke="#b2bcc6" stroke-width="1" fill="none"/><path d="M.7 5.600c.5 2.700 2.300 3.600 4.300 3.600s3.800-.9 4.300-3.600" stroke="#b2bcc6" stroke-width="1.700" fill="none" stroke-linecap="round"/></svg><span style="letter-spacing:.35px"> pz: </span><i>No description available</i></span>
<span class="t vd" style="left:1322.3px;top:434.12px;font-size:10.5px;">▼</span>
<span class="t vd" style="left:1336.4px;top:434.69px;font-size:11px;"><a>6</a><svg class="anc" width="10" height="10" viewBox="0 0 10 10"><circle cx="5" cy="1.900" r="1.700" fill="#b2bcc6"/><path d="M5 2v7" stroke="#b2bcc6" stroke-width="1.900" fill="none"/><path d="M3.300 4.300h3.400" stroke="#b2bcc6" stroke-width="1" fill="none"/><path d="M.7 5.600c.5 2.700 2.300 3.600 4.300 3.600s3.800-.9 4.300-3.600" stroke="#b2bcc6" stroke-width="1.700" fill="none" stroke-linecap="round"/></svg><span style="letter-spacing:.35px"> pz: </span><i>No description available</i></span>
<span class="t vd" style="left:1281.2px;top:463.69px;font-size:11px;font-weight:bold;letter-spacing:-0.07px">Surfaces in description:</span>
<span class="t vd" style="left:1281.2px;top:481.69px;font-size:11px;"><a>5</a><svg class="anc" width="10" height="10" viewBox="0 0 10 10"><circle cx="5" cy="1.900" r="1.700" fill="#b2bcc6"/><path d="M5 2v7" stroke="#b2bcc6" stroke-width="1.900" fill="none"/><path d="M3.300 4.300h3.400" stroke="#b2bcc6" stroke-width="1" fill="none"/><path d="M.7 5.600c.5 2.700 2.300 3.600 4.300 3.600s3.800-.9 4.300-3.600" stroke="#b2bcc6" stroke-width="1.700" fill="none" stroke-linecap="round"/></svg></span>
<span class="t vd" style="left:1325.4px;top:481.69px;font-size:11px;">pz</span>
<span class="t vd" style="left:1348.7px;top:481.69px;font-size:11px;">-0.5</span>
<span class="t vd" style="left:1407.3px;top:481.69px;font-size:11px;"><i>No description available</i></span>
<span class="t vd" style="left:1281.2px;top:495.09px;font-size:11px;"><a>6</a><svg class="anc" width="10" height="10" viewBox="0 0 10 10"><circle cx="5" cy="1.900" r="1.700" fill="#b2bcc6"/><path d="M5 2v7" stroke="#b2bcc6" stroke-width="1.900" fill="none"/><path d="M3.300 4.300h3.400" stroke="#b2bcc6" stroke-width="1" fill="none"/><path d="M.7 5.600c.5 2.700 2.300 3.600 4.300 3.600s3.800-.9 4.300-3.600" stroke="#b2bcc6" stroke-width="1.700" fill="none" stroke-linecap="round"/></svg></span>
<span class="t vd" style="left:1325.4px;top:495.09px;font-size:11px;">pz</span>
<span class="t vd" style="left:1348.7px;top:495.09px;font-size:11px;">0.5</span>
<span class="t vd" style="left:1407.3px;top:495.09px;font-size:11px;"><i>No description available</i></span>
<span class="t vd" style="left:1281.2px;top:508.49px;font-size:11px;"><a>11</a><svg class="anc" width="10" height="10" viewBox="0 0 10 10"><circle cx="5" cy="1.900" r="1.700" fill="#b2bcc6"/><path d="M5 2v7" stroke="#b2bcc6" stroke-width="1.900" fill="none"/><path d="M3.300 4.300h3.400" stroke="#b2bcc6" stroke-width="1" fill="none"/><path d="M.7 5.600c.5 2.700 2.300 3.600 4.300 3.600s3.800-.9 4.300-3.600" stroke="#b2bcc6" stroke-width="1.700" fill="none" stroke-linecap="round"/></svg></span>
<span class="t vd" style="left:1325.4px;top:508.49px;font-size:11px;">px</span>
<span class="t vd" style="left:1348.7px;top:508.49px;font-size:11px;">-0.6325</span>
<span class="t vd" style="left:1407.3px;top:508.49px;font-size:11px;"><i>No description available</i></span>
<span class="t vd" style="left:1281.2px;top:521.89px;font-size:11px;"><a>12</a><svg class="anc" width="10" height="10" viewBox="0 0 10 10"><circle cx="5" cy="1.900" r="1.700" fill="#b2bcc6"/><path d="M5 2v7" stroke="#b2bcc6" stroke-width="1.900" fill="none"/><path d="M3.300 4.300h3.400" stroke="#b2bcc6" stroke-width="1" fill="none"/><path d="M.7 5.600c.5 2.700 2.300 3.600 4.300 3.600s3.800-.9 4.300-3.600" stroke="#b2bcc6" stroke-width="1.700" fill="none" stroke-linecap="round"/></svg></span>
<span class="t vd" style="left:1325.4px;top:521.89px;font-size:11px;">px</span>
<span class="t vd" style="left:1348.7px;top:521.89px;font-size:11px;">0.6325</span>
<span class="t vd" style="left:1407.3px;top:521.89px;font-size:11px;"><i>No description available</i></span>
<span class="t vd" style="left:1281.2px;top:535.29px;font-size:11px;"><a>13</a><svg class="anc" width="10" height="10" viewBox="0 0 10 10"><circle cx="5" cy="1.900" r="1.700" fill="#b2bcc6"/><path d="M5 2v7" stroke="#b2bcc6" stroke-width="1.900" fill="none"/><path d="M3.300 4.300h3.400" stroke="#b2bcc6" stroke-width="1" fill="none"/><path d="M.7 5.600c.5 2.700 2.300 3.600 4.300 3.600s3.800-.9 4.300-3.600" stroke="#b2bcc6" stroke-width="1.700" fill="none" stroke-linecap="round"/></svg></span>
<span class="t vd" style="left:1325.4px;top:535.29px;font-size:11px;">py</span>
<span class="t vd" style="left:1348.7px;top:535.29px;font-size:11px;">-0.6325</span>
<span class="t vd" style="left:1407.3px;top:535.29px;font-size:11px;"><i>No description available</i></span>
<span class="t vd" style="left:1281.2px;top:548.69px;font-size:11px;"><a>14</a><svg class="anc" width="10" height="10" viewBox="0 0 10 10"><circle cx="5" cy="1.900" r="1.700" fill="#b2bcc6"/><path d="M5 2v7" stroke="#b2bcc6" stroke-width="1.900" fill="none"/><path d="M3.300 4.300h3.400" stroke="#b2bcc6" stroke-width="1" fill="none"/><path d="M.7 5.600c.5 2.700 2.300 3.600 4.300 3.600s3.800-.9 4.300-3.600" stroke="#b2bcc6" stroke-width="1.700" fill="none" stroke-linecap="round"/></svg></span>
<span class="t vd" style="left:1325.4px;top:548.69px;font-size:11px;">py</span>
<span class="t vd" style="left:1348.7px;top:548.69px;font-size:11px;">0.6325</span>
<span class="t vd" style="left:1407.3px;top:548.69px;font-size:11px;"><i>No description available</i></span>
<span class="t vd" style="left:1281.2px;top:576.69px;font-size:11px;font-weight:bold;letter-spacing:-0.11px">Used in tallies:</span>
<span class="t vd" style="left:1281.2px;top:595.69px;font-size:11px;"><a>14</a><svg class="anc" width="10" height="10" viewBox="0 0 10 10"><circle cx="5" cy="1.900" r="1.700" fill="#b2bcc6"/><path d="M5 2v7" stroke="#b2bcc6" stroke-width="1.900" fill="none"/><path d="M3.300 4.300h3.400" stroke="#b2bcc6" stroke-width="1" fill="none"/><path d="M.7 5.600c.5 2.700 2.300 3.600 4.300 3.600s3.800-.9 4.300-3.600" stroke="#b2bcc6" stroke-width="1.700" fill="none" stroke-linecap="round"/></svg></span>
<span class="t vd" style="left:1325.4px;top:595.69px;font-size:11px;"><i>No description available</i></span>
<span class="t vd" style="left:1281.5px;top:623.69px;font-size:11px;font-weight:bold;letter-spacing:-0.06px">Variable parameters</span>
<span class="t vd" style="left:1301.6px;top:651.69px;font-size:11px;font-weight:bold">Param.</span>
<span class="t vd" style="left:1360.2px;top:651.69px;font-size:11px;font-weight:bold">Value</span>
<span class="t vd" style="left:1414.2px;top:651.69px;font-size:11px;font-weight:bold">Default</span>
<span class="t vd" style="left:1475.9px;top:651.69px;font-size:11px;font-weight:bold">Description</span>
<div style="left:1286px;top:664px;width:601px;height:1px;background:#333"></div>
<div style="left:1286px;top:678px;width:601px;height:27px;background:#f3f3f3"></div>
<span class="t vd" style="left:1301.6px;top:666.69px;font-size:11px;">VOL</span>
<span class="t vd" style="left:1360.2px;top:666.69px;font-size:11px;">j</span>
<span class="t vd" style="left:1414.2px;top:666.69px;font-size:11px;">j</span>
<span class="t vd" style="left:1475.9px;top:666.69px;font-size:11px;;letter-spacing:0.09px">Volume: Volume of cell</span>
<span class="t vd" style="left:1301.6px;top:679.69px;font-size:11px;">TMP</span>
<span class="t vd" style="left:1360.2px;top:679.69px;font-size:11px;">2.53E-</span>
<span class="t vd" style="left:1414.2px;top:679.69px;font-size:11px;">2.53E-</span>
<span class="t vd" style="left:1475.9px;top:679.69px;font-size:11px;;letter-spacing:0.13px">Temperature: Temperature of cell</span>
<span class="t vd" style="left:1360.2px;top:692.99px;font-size:11px;">08</span>
<span class="t vd" style="left:1414.2px;top:692.99px;font-size:11px;">08</span>
<span class="t vd" style="left:1301.6px;top:706.19px;font-size:11px;">PWT</span>
<span class="t vd" style="left:1360.2px;top:706.19px;font-size:11px;">-1</span>
<span class="t vd" style="left:1414.2px;top:706.19px;font-size:11px;">-1</span>
<span class="t vd" style="left:1475.9px;top:706.19px;font-size:11px;;letter-spacing:0.04px">Photon weigth: Control the number and weight of neutron-induced</span>
<!-- parser messages panel -->
<div style="left:1271px;top:730px;width:643px;height:282px;border:1px solid #cccedb;background:#eeeef2"></div>
<span class="t seg cap" style="left:1276.3px;top:735.84px;font-size:12px;;letter-spacing:-0.52px">Parser messages</span>
<svg style="left:1368px;top:739px" width="507" height="5" shape-rendering="crispEdges"><rect width="507" height="5" fill="url(#gripp)"/></svg>
<svg style="left:1881px;top:734.5px" width="30" height="14" viewBox="0 0 30 14"><path d="M2.500 1.500h4v6h-4z" stroke="#000" stroke-width="1" fill="none"/><path d="M5 1.500h2v6h-2z" fill="#000"/><path d="M.5 7.500h8M4.500 8v4.500" stroke="#000" stroke-width="1" fill="none"/><path d="M16.500 2.500l9 8M25.500 2.500l-9 8" stroke="#000" stroke-width="1.600" fill="none"/></svg>
<div style="left:1272px;top:753px;width:25px;height:258px;background:linear-gradient(90deg,#fdfdfd,#f4f4f4 50%,#ececec);border-radius:3px 3px 0 0"></div>
<div style="left:1276px;top:758px;width:2px;height:2px;background:#b8b8b8"></div>
<div style="left:1280px;top:758px;width:2px;height:2px;background:#b8b8b8"></div>
<div style="left:1284px;top:758px;width:2px;height:2px;background:#b8b8b8"></div>
<div style="left:1272px;top:765px;width:22px;height:20px;background:#c4f7c4"></div>
<div style="left:1272px;top:788px;width:22px;height:20px;background:#c4f7c4"></div>
<div style="left:1272px;top:811px;width:22px;height:20px;background:#c4f7c4"></div>
<div style="left:1272px;top:834px;width:22px;height:20px;background:#c4f7c4"></div>
<svg style="left:1276px;top:768px" width="14" height="14" viewBox="0 0 14 14"><defs><linearGradient id="gxo" x1="0" y1="0" x2="0" y2="1"><stop offset="0" stop-color="#f47a3c"/><stop offset="1" stop-color="#c23a0c"/></linearGradient><linearGradient id="gxr" x1="0" y1="0" x2="0" y2="1"><stop offset="0" stop-color="#f03a2a"/><stop offset="1" stop-color="#a00000"/></linearGradient></defs><path d="M3.200 .8l3.800 3.800l3.800-3.800l2.400 2.400l-3.800 3.800l3.800 3.800l-2.400 2.400l-3.800-3.800l-3.800 3.800l-2.400-2.400l3.800-3.800l-3.800-3.800z" fill="url(#gxo)"/></svg>
<svg style="left:1275px;top:790px" width="16" height="15" viewBox="0 0 16 15"><path d="M8 2l6 11h-12z" fill="#f9a820" stroke="#f39412" stroke-width="2.400" stroke-linejoin="round"/><path d="M8 2.500l5 9.500h-10z" fill="#fbb838"/><rect x="7.100" y="4.500" width="1.800" height="5" rx=".6" fill="#222"/><rect x="7.100" y="10.500" width="1.800" height="1.800" rx=".5" fill="#222"/></svg>
<svg style="left:1276px;top:814px" width="14" height="14" viewBox="0 0 14 14"><circle cx="7" cy="7" r="6.100" fill="none" stroke="#0d5f96" stroke-width="1.700" stroke-dasharray="1.250 1.146"/><circle cx="7" cy="7" r="5.700" fill="url(#ginfo)"/><path d="M5.900 2.500h2.200l-.5 5.700h-1.200z" fill="#fff"/><path d="M5.900 9.300h2.200l-1.100 2z" fill="#fff"/></svg>
<svg style="left:1276px;top:837px" width="14" height="14" viewBox="0 0 14 14"><defs><linearGradient id="gqd" x1="0" y1="0" x2="1" y2="1"><stop offset="0" stop-color="#ffffff"/><stop offset="1" stop-color="#7fb0e4"/></linearGradient></defs><path d="M7 .6l6.400 6.400l-6.400 6.400l-6.400-6.400z" fill="url(#gqd)" stroke="#4d8acc" stroke-width="1"/><text x="7" y="10" text-anchor="middle" font-family="Liberation Sans,sans-serif" font-weight="bold" font-size="8.500" fill="#3a78c4">?</text></svg>
<div style="left:1297px;top:752px;width:616px;height:259px;background:#fff;border:1px solid #82878f;border-left-color:#6a6a6a;border-top-color:#eeeef2"></div>
<div style="left:1358px;top:753px;width:1px;height:24px;background:#e5e5e5"></div>
<div style="left:1408px;top:753px;width:1px;height:24px;background:#e5e5e5"></div>
<div style="left:1458px;top:753px;width:1px;height:24px;background:#e5e5e5"></div>
<div style="left:1888px;top:753px;width:1px;height:24px;background:#e5e5e5"></div>
<span class="t mss" style="left:1305px;top:759.69px;font-size:11px;">Idx</span>
<span class="t mss" style="left:1365px;top:759.69px;font-size:11px;">Line</span>
<span class="t mss" style="left:1415px;top:759.69px;font-size:11px;">Pos</span>
<span class="t mss" style="left:1465px;top:759.69px;font-size:11px;">Message</span>
<span class="t mss" style="left:1311.2px;top:781.19px;font-size:11px;color:#1e3287;font-size:12px;letter-spacing:-0.53px">Errors</span>
<div style="left:1345px;top:786px;width:539px;height:1px;background:#a0b4e0"></div>
<svg style="left:1305px;top:800px" width="13" height="13" viewBox="0 0 13 13"><path d="M2.800 .3l3.700 3.700l3.700-3.700l2.500 2.500l-3.700 3.700l3.700 3.700l-2.500 2.500l-3.700-3.700l-3.700 3.700l-2.500-2.500l3.700-3.700l-3.700-3.700z" fill="url(#gxr)"/></svg>
<span class="t mss" style="left:1320.6px;top:801.19px;font-size:11px;">1</span>
<span class="t mss" style="left:1365px;top:801.19px;font-size:11px;">173</span>
<span class="t mss" style="left:1415px;top:801.19px;font-size:11px;">8</span>
<span class="t mss" style="left:1465.3px;top:801.19px;font-size:11px;;letter-spacing:-0.20px">Unequal parameter count for SI/DS1 (0) &amp; SP1 (264).</span>
<span class="t mss" style="left:1311.2px;top:823.19px;font-size:11px;color:#1e3287;font-size:12px;letter-spacing:0.22px">Information</span>
<div style="left:1378px;top:828px;width:506px;height:1px;background:#a0b4e0"></div>
<div style="left:1298px;top:753px;width:591px;height:257px;overflow:hidden"><svg style="left:5.8px;top:88px" width="14" height="14" viewBox="0 0 14 14"><circle cx="7" cy="7" r="6.100" fill="none" stroke="url(#ginfo2)" stroke-width="1.700" stroke-dasharray="1.250 1.146"/><circle cx="7" cy="7" r="5.700" fill="url(#ginfo2)"/><path d="M5.900 2.500h2.200l-.5 5.700h-1.200z" fill="#fff"/><path d="M5.900 9.300h2.200l-1.100 2z" fill="#fff"/></svg><span class="t mss" style="left:22.6px;top:90.69px;font-size:11px;">1</span><span class="t mss" style="left:67px;top:90.69px;font-size:11px;">58</span><span class="t mss" style="left:117px;top:90.69px;font-size:11px;">1</span><span class="t mss" style="left:167px;top:90.69px;font-size:11px;;letter-spacing:-0.17px">Material 1 is not normalized: Σ = 0.06752111!</span><svg style="left:5.8px;top:106px" width="14" height="14" viewBox="0 0 14 14"><circle cx="7" cy="7" r="6.100" fill="none" stroke="url(#ginfo2)" stroke-width="1.700" stroke-dasharray="1.250 1.146"/><circle cx="7" cy="7" r="5.700" fill="url(#ginfo2)"/><path d="M5.900 2.500h2.200l-.5 5.700h-1.200z" fill="#fff"/><path d="M5.900 9.300h2.200l-1.100 2z" fill="#fff"/></svg><span class="t mss" style="left:22.6px;top:108.69px;font-size:11px;">2</span><span class="t mss" style="left:67px;top:108.69px;font-size:11px;">61</span><span class="t mss" style="left:117px;top:108.69px;font-size:11px;">1</span><span class="t mss" style="left:167px;top:108.69px;font-size:11px;;letter-spacing:-0.21px">Material 2 is not normalized: Σ = 0.043107!</span><svg style="left:5.8px;top:124px" width="14" height="14" viewBox="0 0 14 14"><circle cx="7" cy="7" r="6.100" fill="none" stroke="url(#ginfo2)" stroke-width="1.700" stroke-dasharray="1.250 1.146"/><circle cx="7" cy="7" r="5.700" fill="url(#ginfo2)"/><path d="M5.900 2.500h2.200l-.5 5.700h-1.200z" fill="#fff"/><path d="M5.900 9.300h2.200l-1.100 2z" fill="#fff"/></svg><span class="t mss" style="left:22.6px;top:126.69px;font-size:11px;">3</span><span class="t mss" style="left:67px;top:126.69px;font-size:11px;">62</span><span class="t mss" style="left:117px;top:126.69px;font-size:11px;">1</span><span class="t mss" style="left:167px;top:126.69px;font-size:11px;;letter-spacing:-0.21px">Material 3 is not normalized: Σ = 0.066224!</span><svg style="left:5.8px;top:142px" width="14" height="14" viewBox="0 0 14 14"><circle cx="7" cy="7" r="6.100" fill="none" stroke="url(#ginfo2)" stroke-width="1.700" stroke-dasharray="1.250 1.146"/><circle cx="7" cy="7" r="5.700" fill="url(#ginfo2)"/><path d="M5.900 2.500h2.200l-.5 5.700h-1.200z" fill="#fff"/><path d="M5.900 9.300h2.200l-1.100 2z" fill="#fff"/></svg><span class="t mss" style="left:22.6px;top:144.69px;font-size:11px;">4</span><span class="t mss" style="left:67px;top:144.69px;font-size:11px;">262</span><span class="t mss" style="left:117px;top:144.69px;font-size:11px;">14</span><span class="t mss" style="left:167px;top:144.69px;font-size:11px;;letter-spacing:-0.26px">Probabilities on SP1 are not normalized. Sum is 792.</span><svg style="left:5.8px;top:160px" width="14" height="14" viewBox="0 0 14 14"><circle cx="7" cy="7" r="6.100" fill="none" stroke="url(#ginfo2)" stroke-width="1.700" stroke-dasharray="1.250 1.146"/><circle cx="7" cy="7" r="5.700" fill="url(#ginfo2)"/><path d="M5.900 2.500h2.200l-.5 5.700h-1.200z" fill="#fff"/><path d="M5.900 9.300h2.200l-1.100 2z" fill="#fff"/></svg><span class="t mss" style="left:22.6px;top:162.69px;font-size:11px;">5</span><span class="t mss" style="left:67px;top:162.69px;font-size:11px;">78</span><span class="t mss" style="left:117px;top:162.69px;font-size:11px;">29</span><span class="t mss" style="left:167px;top:162.69px;font-size:11px;;letter-spacing:-0.20px">Cell 3 is used more than once in tally 14!</span><svg style="left:5.8px;top:178px" width="14" height="14" viewBox="0 0 14 14"><circle cx="7" cy="7" r="6.100" fill="none" stroke="url(#ginfo2)" stroke-width="1.700" stroke-dasharray="1.250 1.146"/><circle cx="7" cy="7" r="5.700" fill="url(#ginfo2)"/><path d="M5.900 2.500h2.200l-.5 5.700h-1.200z" fill="#fff"/><path d="M5.900 9.300h2.200l-1.100 2z" fill="#fff"/></svg><span class="t mss" style="left:22.6px;top:180.69px;font-size:11px;">6</span><span class="t mss" style="left:67px;top:180.69px;font-size:11px;">78</span><span class="t mss" style="left:117px;top:180.69px;font-size:11px;">31</span><span class="t mss" style="left:167px;top:180.69px;font-size:11px;;letter-spacing:-0.20px">Cell 2 is used more than once in tally 14!</span><svg style="left:5.8px;top:196px" width="14" height="14" viewBox="0 0 14 14"><circle cx="7" cy="7" r="6.100" fill="none" stroke="url(#ginfo2)" stroke-width="1.700" stroke-dasharray="1.250 1.146"/><circle cx="7" cy="7" r="5.700" fill="url(#ginfo2)"/><path d="M5.900 2.500h2.200l-.5 5.700h-1.200z" fill="#fff"/><path d="M5.900 9.300h2.200l-1.100 2z" fill="#fff"/></svg><span class="t mss" style="left:22.6px;top:198.69px;font-size:11px;">7</span><span class="t mss" style="left:67px;top:198.69px;font-size:11px;">78</span><span class="t mss" style="left:117px;top:198.69px;font-size:11px;">42</span><span class="t mss" style="left:167px;top:198.69px;font-size:11px;;letter-spacing:-0.20px">Cell 1 is used more than once in tally 14!</span><svg style="left:5.8px;top:214px" width="14" height="14" viewBox="0 0 14 14"><circle cx="7" cy="7" r="6.100" fill="none" stroke="url(#ginfo2)" stroke-width="1.700" stroke-dasharray="1.250 1.146"/><circle cx="7" cy="7" r="5.700" fill="url(#ginfo2)"/><path d="M5.900 2.500h2.200l-.5 5.700h-1.200z" fill="#fff"/><path d="M5.900 9.300h2.200l-1.100 2z" fill="#fff"/></svg><span class="t mss" style="left:22.6px;top:216.69px;font-size:11px;">8</span><span class="t mss" style="left:67px;top:216.69px;font-size:11px;">78</span><span class="t mss" style="left:117px;top:216.69px;font-size:11px;">47</span><span class="t mss" style="left:167px;top:216.69px;font-size:11px;;letter-spacing:-0.20px">Cell 3 is used more than once in tally 14!</span><svg style="left:5.8px;top:232px" width="14" height="14" viewBox="0 0 14 14"><circle cx="7" cy="7" r="6.100" fill="none" stroke="url(#ginfo2)" stroke-width="1.700" stroke-dasharray="1.250 1.146"/><circle cx="7" cy="7" r="5.700" fill="url(#ginfo2)"/><path d="M5.900 2.500h2.200l-.5 5.700h-1.200z" fill="#fff"/><path d="M5.900 9.300h2.200l-1.100 2z" fill="#fff"/></svg><span class="t mss" style="left:22.6px;top:234.69px;font-size:11px;">9</span><span class="t mss" style="left:67px;top:234.69px;font-size:11px;">78</span><span class="t mss" style="left:117px;top:234.69px;font-size:11px;">49</span><span class="t mss" style="left:167px;top:234.69px;font-size:11px;;letter-spacing:-0.20px">Cell 2 is used more than once in tally 14!</span><svg style="left:5.8px;top:250px" width="14" height="14" viewBox="0 0 14 14"><circle cx="7" cy="7" r="6.100" fill="none" stroke="url(#ginfo2)" stroke-width="1.700" stroke-dasharray="1.250 1.146"/><circle cx="7" cy="7" r="5.700" fill="url(#ginfo2)"/><path d="M5.900 2.500h2.200l-.5 5.700h-1.200z" fill="#fff"/><path d="M5.900 9.300h2.200l-1.100 2z" fill="#fff"/></svg><span class="t mss" style="left:22.6px;top:252.69px;font-size:11px;">10</span><span class="t mss" style="left:67px;top:252.69px;font-size:11px;">78</span><span class="t mss" style="left:117px;top:252.69px;font-size:11px;">60</span><span class="t mss" style="left:167px;top:252.69px;font-size:11px;;letter-spacing:-0.20px">Cell 1 is used more than once in tally 14!</span></div>
<div style="left:1895px;top:753px;width:17px;height:257px;background:#f0f0f0"></div>
<div style="left:1895px;top:770px;width:16px;height:17px;background:#cdcdcd"></div>
<svg style="left:1899px;top:759px" width="9" height="6" viewBox="0 0 9 6"><path d="M1.600 5.200l2.900-2.900l2.900 2.900" stroke="#5a5a5a" stroke-width="2" fill="none"/></svg>
<svg style="left:1899px;top:999px" width="9" height="6" viewBox="0 0 9 6"><path d="M1.600 .8l2.900 2.900l2.900-2.900" stroke="#5a5a5a" stroke-width="2" fill="none"/></svg>
</body></html>
